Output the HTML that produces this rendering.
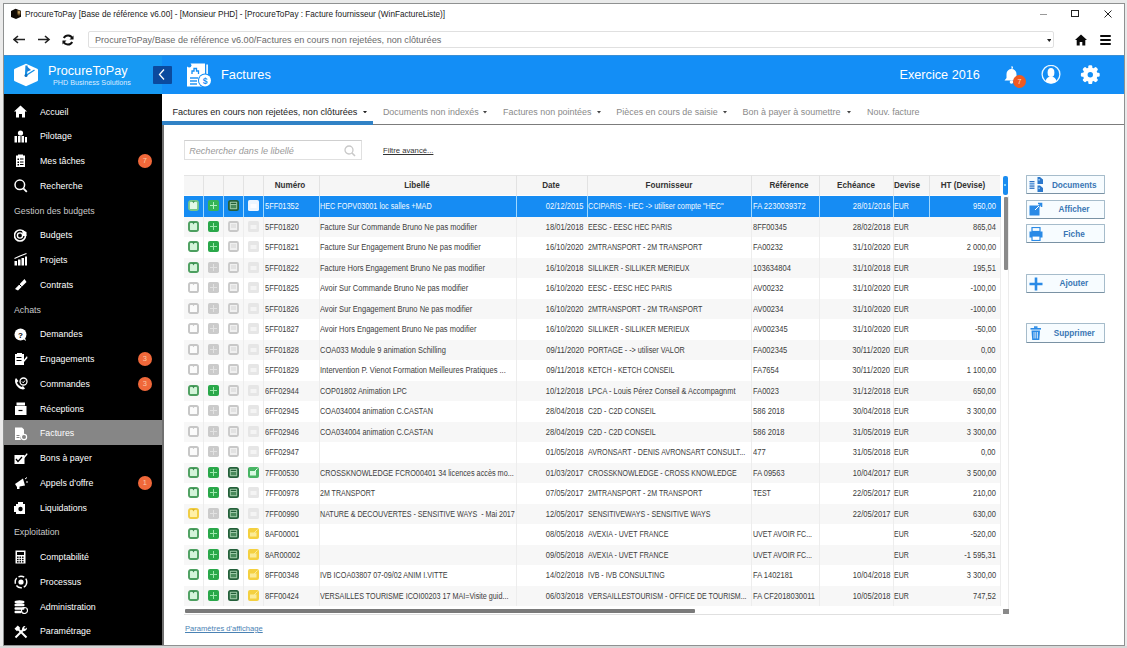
<!DOCTYPE html>
<html><head><meta charset="utf-8"><style>
*{box-sizing:border-box;margin:0;padding:0}
html,body{width:1127px;height:648px;overflow:hidden;background:#e9eaea;font-family:"Liberation Sans",sans-serif}
.abs{position:absolute}
.t{position:absolute;white-space:nowrap;line-height:1}
.tb{font-size:7.5px;color:#333}
</style></head><body>
<div class="abs" style="left:0;top:0;width:3px;height:648px;background:#ebebeb"></div>
<div class="abs" style="left:0;top:646px;width:1127px;height:2px;background:#d8d8d8"></div>
<div class="abs" style="left:3px;top:3px;width:1122px;height:643px;background:#8f9191"></div>
<div class="abs" style="left:4px;top:4px;width:1120px;height:641px;background:#fff;overflow:hidden">

<svg class="abs" style="left:5.50px;top:3.50px;" width="12" height="11.5" viewBox="0 0 12 11.5"><defs><radialGradient id="tg" cx="0.62" cy="0.35" r="0.5"><stop offset="0" stop-color="#e8c888"/><stop offset="0.5" stop-color="#7a5a28"/><stop offset="1" stop-color="#140c04"/></radialGradient></defs><path d="M1 3 L5.5 0.8 L11 2.8 L11 8.8 L6 11 L1 9Z" fill="#0e0904"/><path d="M6 1.5 L10.8 3.2 L10.8 8.5 L6.5 9.5Z" fill="url(#tg)"/><path d="M5.8 2 L6.3 9.8" stroke="#1a1208" stroke-width="0.8"/></svg>
<div class="t" style="left:21.00px;top:7.40px;font-size:8.2px;color:#1a1a1a">ProcureToPay [Base de référence v6.00] - [Monsieur PHD] - [ProcureToPay : Facture fournisseur (WinFactureListe)]</div>
<div class="abs" style="left:1036.00px;top:9.50px;width:7.00px;height:1.00px;background:#999"></div>
<div class="abs" style="left:1067.00px;top:6.00px;width:7.50px;height:6.50px;border:1px solid #222"></div>
<svg class="abs" style="left:1099.50px;top:5.50px;" width="8" height="8" viewBox="0 0 8 8"><path d="M0.5 0.5 L7.5 7.5 M7.5 0.5 L0.5 7.5" stroke="#222" stroke-width="1"/></svg>
<svg class="abs" style="left:9.00px;top:31.00px;" width="13" height="9" viewBox="0 0 13 9"><path d="M1 4.5 H12 M5 1 L1 4.5 L5 8" stroke="#222" stroke-width="1.6" fill="none"/></svg>
<svg class="abs" style="left:34.00px;top:31.00px;" width="13" height="9" viewBox="0 0 13 9"><path d="M0 4.5 H11 M7 1 L11 4.5 L7 8" stroke="#222" stroke-width="1.6" fill="none"/></svg>
<svg class="abs" style="left:58.00px;top:30.00px;" width="12" height="12" viewBox="0 0 12 12"><path d="M10.5 4.5 A4.8 4.8 0 0 0 1.8 4" stroke="#111" stroke-width="2" fill="none"/><path d="M1.5 7.5 A4.8 4.8 0 0 0 10.2 8" stroke="#111" stroke-width="2" fill="none"/><path d="M11.5 1.5 L11.5 5.5 L7.5 5.5Z" fill="#111"/><path d="M0.5 10.5 L0.5 6.5 L4.5 6.5Z" fill="#111"/></svg>
<div class="abs" style="left:84.00px;top:27.00px;width:966.00px;height:17.00px;border:1px solid #e0e0e0;border-radius:2px"></div>
<div class="t" style="left:91.00px;top:32.20px;font-size:9.1px;color:#6a6a6a">ProcureToPay/Base de référence v6.00/Factures en cours non rejetées, non clôturées</div>
<svg class="abs" style="left:1042.50px;top:34.50px;" width="4.5" height="3" viewBox="0 0 4.5 3"><path d="M0 0 H4.5 L2.25 3Z" fill="#222"/></svg>
<svg class="abs" style="left:1071.00px;top:30.00px;" width="12" height="12" viewBox="0 0 12 12"><path d="M6 0.5 L12 6 L10.3 6 L10.3 11.5 L7.3 11.5 L7.3 8 L4.7 8 L4.7 11.5 L1.7 11.5 L1.7 6 L0 6Z" fill="#0a0a0a"/></svg>
<div class="abs" style="left:1096.00px;top:31.00px;width:11.00px;height:2.00px;background:#0a0a0a;border-radius:1px"></div>
<div class="abs" style="left:1096.00px;top:35.00px;width:11.00px;height:2.00px;background:#0a0a0a;border-radius:1px"></div>
<div class="abs" style="left:1096.00px;top:39.00px;width:11.00px;height:2.00px;background:#0a0a0a;border-radius:1px"></div>
<div class="abs" style="left:0.00px;top:51.00px;width:1120.00px;height:38.50px;background:#138ef6"></div>
<div class="abs" style="left:0.00px;top:51.00px;width:158.00px;height:38.50px;background:#1699f3"></div>
<div class="abs" style="left:0.00px;top:51.00px;width:1120.00px;height:1.00px;background:#3b8fd4"></div>
<svg class="abs" style="left:9.00px;top:59.00px;" width="26" height="24" viewBox="0 0 26 24"><path d="M13 0.8 L24.2 5.8 Q25 6.2 25 7 L25 17 Q25 17.8 24.2 18.2 L13 23.2 L1.8 18.2 Q1 17.8 1 17 L1 7 Q1 6.2 1.8 5.8Z" fill="#fff"/><path d="M13.5 2.5 L13 12.5" stroke="#1490e6" stroke-width="2.2" fill="none"/><path d="M13.5 3 L18 7 L13.5 9Z" fill="#1a7fd8"/><path d="M13 12.5 L21.5 7" stroke="#1490e6" stroke-width="1.3" fill="none"/><circle cx="13" cy="12.5" r="1.5" fill="#0f6fc0"/></svg>
<div class="t" style="left:44.00px;top:60.50px;font-size:12.7px;color:#fff">ProcureToPay</div>
<div class="t" style="left:49.00px;top:75.00px;font-size:7.2px;color:#dcecff">PHD Business Solutions</div>
<div class="abs" style="left:149.00px;top:61.50px;width:19.00px;height:18.50px;background:#0b4a9e;border-radius:1px"></div>
<svg class="abs" style="left:153.00px;top:64.00px;" width="10" height="13" viewBox="0 0 10 13"><path d="M7 1.5 L2.5 6.5 L7 11.5" stroke="#fff" stroke-width="1.3" fill="none"/></svg>
<svg class="abs" style="left:182.00px;top:58.00px;" width="27" height="27" viewBox="0 0 27 27"><path d="M4.5 1.5 H19 V24.5 H1 V5 Z" fill="#fff"/><circle cx="3.2" cy="3.2" r="2.2" fill="#138ef6"/><rect x="20.3" y="2.5" width="1.6" height="14" fill="#fff"/><path d="M6 12 V9 H8 V6.5 H10.5 V9 H12.5 V12" fill="none" stroke="#138ef6" stroke-width="1.3"/><rect x="4" y="15.3" width="8" height="1.4" fill="#138ef6"/><rect x="4" y="18.3" width="7" height="1.4" fill="#138ef6"/><rect x="4" y="21.3" width="7" height="1.4" fill="#138ef6"/><circle cx="19" cy="18.5" r="7" fill="#138ef6"/><circle cx="19" cy="18.5" r="6" fill="#fff"/><text x="19" y="21.6" font-size="8.5" text-anchor="middle" fill="#138ef6" font-family="Liberation Sans" font-weight="bold">$</text></svg>
<div class="t" style="left:217.00px;top:64.80px;font-size:12.8px;color:#fff">Factures</div>
<div class="t" style="left:895.50px;top:65.20px;font-size:12.7px;color:#fff">Exercice 2016</div>
<svg class="abs" style="left:998.50px;top:60.50px;" width="17" height="19" viewBox="0 0 17 19"><path d="M8.5 1 A1.5 1.5 0 0 1 8.5 4 A5 5 0 0 1 13.5 9 V13 L15.5 15.5 H1.5 L3.5 13 V9 A5 5 0 0 1 8.5 4Z" fill="#fff"/><circle cx="8.5" cy="17" r="1.8" fill="#fff"/></svg>
<div class="abs" style="left:1008.80px;top:70.80px;width:13.00px;height:13.00px;border-radius:50%;background:#f05a22"></div>
<div class="t" style="left:1013.50px;top:74.00px;font-size:7px;color:#ffe0d0">7</div>
<svg class="abs" style="left:1037.00px;top:61.00px;" width="20" height="19" viewBox="0 0 20 19"><circle cx="10" cy="9.3" r="8.9" fill="none" stroke="#e8f6ff" stroke-width="1.3"/><ellipse cx="10" cy="7.5" rx="3.4" ry="4.6" fill="#fff"/><path d="M4.5 16.5 C5 13 7.5 11.5 10 11.5 C12.5 11.5 15 13 15.5 16.5 A8.3 8.3 0 0 1 4.5 16.5Z" fill="#fff"/></svg>
<svg class="abs" style="left:1076.00px;top:61.00px;" width="20" height="19" viewBox="0 0 20 19"><g transform="translate(10.3 9.7)"><circle r="7.2" fill="#fff"/><rect x="-2" y="-9.4" width="4" height="5" rx="1.3" fill="#fff" transform="rotate(0)"/><rect x="-2" y="-9.4" width="4" height="5" rx="1.3" fill="#fff" transform="rotate(45)"/><rect x="-2" y="-9.4" width="4" height="5" rx="1.3" fill="#fff" transform="rotate(90)"/><rect x="-2" y="-9.4" width="4" height="5" rx="1.3" fill="#fff" transform="rotate(135)"/><rect x="-2" y="-9.4" width="4" height="5" rx="1.3" fill="#fff" transform="rotate(180)"/><rect x="-2" y="-9.4" width="4" height="5" rx="1.3" fill="#fff" transform="rotate(225)"/><rect x="-2" y="-9.4" width="4" height="5" rx="1.3" fill="#fff" transform="rotate(270)"/><rect x="-2" y="-9.4" width="4" height="5" rx="1.3" fill="#fff" transform="rotate(315)"/><circle r="2.7" fill="#138ef6"/></g></svg>
<div class="abs" style="left:0.00px;top:89.50px;width:158.00px;height:552.00px;background:#000"></div>
<div class="abs" style="left:158.00px;top:121.00px;width:2.00px;height:520.00px;background:#707070"></div>
<svg class="abs" style="left:10.00px;top:100.80px;" width="14" height="14" viewBox="0 0 14 14"><path d="M6.5 0.5 L13 6.5 L11 6.5 L11 12.5 L8 12.5 L8 9 L5 9 L5 12.5 L2 12.5 L2 6.5 L0 6.5Z" fill="#fff"/></svg>
<div class="t" style="left:36.00px;top:103.50px;font-size:8.8px;color:#fff">Accueil</div>
<svg class="abs" style="left:10.00px;top:125.55px;" width="14" height="14" viewBox="0 0 14 14"><circle cx="6.5" cy="3" r="2.6" fill="#fff"/><rect x="0.5" y="6" width="2.5" height="6.5" fill="#fff"/><rect x="4" y="6" width="2.5" height="6.5" fill="#fff"/><rect x="7.5" y="6" width="2.5" height="6.5" fill="#fff"/><rect x="11" y="7" width="2" height="5.5" fill="#fff"/></svg>
<div class="t" style="left:36.00px;top:128.25px;font-size:8.8px;color:#fff">Pilotage</div>
<svg class="abs" style="left:10.00px;top:150.30px;" width="14" height="14" viewBox="0 0 14 14"><rect x="2" y="1.5" width="9" height="11.5" fill="#fff"/><rect x="4" y="0.5" width="5" height="2" fill="#fff"/><rect x="3.5" y="4.5" width="1.5" height="1.5" fill="#000"/><rect x="6" y="4.5" width="3.5" height="1" fill="#000"/><rect x="3.5" y="7.5" width="1.5" height="1.5" fill="#000"/><rect x="6" y="7.5" width="3.5" height="1" fill="#000"/><rect x="3.5" y="10" width="1.5" height="1.5" fill="#000"/><rect x="6" y="10" width="3.5" height="1" fill="#000"/></svg>
<div class="t" style="left:36.00px;top:153.00px;font-size:8.8px;color:#fff">Mes tâches</div>
<div class="abs" style="left:134px;top:149.80px;width:14px;height:14px;border-radius:50%;background:#f0683a"></div>
<div class="t" style="left:138.70px;top:153.20px;font-size:7.5px;color:#f9c9a8">7</div>
<svg class="abs" style="left:10.00px;top:175.05px;" width="14" height="14" viewBox="0 0 14 14"><circle cx="5.8" cy="5.8" r="4.8" fill="none" stroke="#fff" stroke-width="1.5"/><path d="M9.3 9.3 L12.8 12.8" stroke="#fff" stroke-width="1.8"/></svg>
<div class="t" style="left:36.00px;top:177.75px;font-size:8.8px;color:#fff">Recherche</div>
<div class="t" style="left:10.00px;top:202.50px;font-size:8.8px;color:#c8c8c8">Gestion des budgets</div>
<svg class="abs" style="left:10.00px;top:224.55px;" width="14" height="14" viewBox="0 0 14 14"><circle cx="6" cy="6.5" r="5.5" fill="none" stroke="#fff" stroke-width="1.6"/><circle cx="6" cy="6.5" r="2.6" fill="none" stroke="#fff" stroke-width="1.4"/><path d="M8 1 L12.5 3 L12.5 7 L9 7Z" fill="#fff"/></svg>
<div class="t" style="left:36.00px;top:227.25px;font-size:8.8px;color:#fff">Budgets</div>
<svg class="abs" style="left:10.00px;top:249.30px;" width="14" height="14" viewBox="0 0 14 14"><rect x="0.5" y="8" width="2.5" height="4.5" fill="#fff"/><rect x="4" y="6.5" width="2.5" height="6" fill="#fff"/><rect x="7.5" y="5" width="2.5" height="7.5" fill="#fff"/><rect x="11" y="3.5" width="2" height="9" fill="#fff"/><path d="M0.5 5.5 L6 3 L12.5 0.5" stroke="#fff" stroke-width="1.1" fill="none"/></svg>
<div class="t" style="left:36.00px;top:252.00px;font-size:8.8px;color:#fff">Projets</div>
<svg class="abs" style="left:10.00px;top:274.05px;" width="14" height="14" viewBox="0 0 14 14"><path d="M1 11 L4 12.5 L12.5 4 L10.5 1 Z" fill="#fff"/><path d="M5 6 L7.5 8.5" stroke="#000" stroke-width="1"/></svg>
<div class="t" style="left:36.00px;top:276.75px;font-size:8.8px;color:#fff">Contrats</div>
<div class="t" style="left:10.00px;top:301.50px;font-size:8.8px;color:#c8c8c8">Achats</div>
<svg class="abs" style="left:10.00px;top:323.55px;" width="14" height="14" viewBox="0 0 14 14"><circle cx="6.5" cy="6.5" r="6" fill="#fff"/><path d="M9 11 L12 13 L11 10Z" fill="#fff"/><text x="6.5" y="9.5" font-size="8" font-weight="bold" text-anchor="middle" fill="#000" font-family="Liberation Sans">?</text></svg>
<div class="t" style="left:36.00px;top:326.25px;font-size:8.8px;color:#fff">Demandes</div>
<svg class="abs" style="left:10.00px;top:348.30px;" width="14" height="14" viewBox="0 0 14 14"><rect x="1" y="2" width="9" height="11" fill="#fff"/><rect x="3" y="1" width="5" height="2" fill="#fff"/><rect x="2.5" y="5" width="5" height="1" fill="#000"/><rect x="2.5" y="8" width="5" height="1" fill="#000"/><path d="M9 9 L13 4 L13.5 6 L10 10Z" fill="#fff"/></svg>
<div class="t" style="left:36.00px;top:351.00px;font-size:8.8px;color:#fff">Engagements</div>
<div class="abs" style="left:134px;top:347.80px;width:14px;height:14px;border-radius:50%;background:#f0683a"></div>
<div class="t" style="left:138.70px;top:351.20px;font-size:7.5px;color:#f9c9a8">3</div>
<svg class="abs" style="left:10.00px;top:373.05px;" width="14" height="14" viewBox="0 0 14 14"><path d="M2 1 C0 3 1 8 5 11 C8 13 10 12.5 11 11.5 L9 9 L7.5 10 C5.5 9 3.5 7 3 5.5 L4.5 4Z" fill="#fff"/><circle cx="9.5" cy="4.5" r="3.5" fill="none" stroke="#fff" stroke-width="1.3"/><path d="M8 4.5 L9.2 5.8 L11 3.5" stroke="#fff" stroke-width="1" fill="none"/></svg>
<div class="t" style="left:36.00px;top:375.75px;font-size:8.8px;color:#fff">Commandes</div>
<div class="abs" style="left:134px;top:372.55px;width:14px;height:14px;border-radius:50%;background:#f0683a"></div>
<div class="t" style="left:138.70px;top:375.95px;font-size:7.5px;color:#f9c9a8">3</div>
<svg class="abs" style="left:10.00px;top:397.80px;" width="14" height="14" viewBox="0 0 14 14"><rect x="1" y="4" width="11.5" height="9" fill="#fff"/><rect x="2.5" y="0.5" width="8.5" height="3" fill="#fff"/><path d="M4.5 8.5 L8.5 8.5" stroke="#000" stroke-width="1.2"/></svg>
<div class="t" style="left:36.00px;top:400.50px;font-size:8.8px;color:#fff">Réceptions</div>
<div class="abs" style="left:0.00px;top:416.30px;width:158.00px;height:25.00px;background:#868686"></div>
<svg class="abs" style="left:10.00px;top:422.55px;" width="14" height="14" viewBox="0 0 14 14"><path d="M1 0.5 H8 L10 2.5 V7 A4 4 0 0 0 7 13 H1Z" fill="#fff"/><circle cx="10" cy="10" r="3.2" fill="#fff"/><circle cx="10" cy="10" r="2" fill="#868686"/><rect x="2.5" y="8" width="3" height="1" fill="#868686"/><rect x="2.5" y="10" width="3" height="1" fill="#868686"/></svg>
<div class="t" style="left:36.00px;top:425.25px;font-size:8.8px;color:#fff">Factures</div>
<svg class="abs" style="left:10.00px;top:447.30px;" width="14" height="14" viewBox="0 0 14 14"><rect x="0.5" y="4" width="10" height="9" fill="#fff"/><path d="M2 8 L4 10.5 L8 6" stroke="#000" stroke-width="1.3" fill="none"/><path d="M7 9 L13 2 L13.5 3.5 L8 10Z" fill="#fff"/></svg>
<div class="t" style="left:36.00px;top:450.00px;font-size:8.8px;color:#fff">Bons à payer</div>
<svg class="abs" style="left:10.00px;top:472.05px;" width="14" height="14" viewBox="0 0 14 14"><path d="M1 8 L9 2.5 L11 9.5 L3 11Z" fill="#fff"/><rect x="3" y="10" width="2.5" height="3" fill="#fff"/><path d="M11 3 L13 1.5 M12 6 L14 6" stroke="#fff" stroke-width="1"/></svg>
<div class="t" style="left:36.00px;top:474.75px;font-size:8.8px;color:#fff">Appels d'offre</div>
<div class="abs" style="left:134px;top:471.55px;width:14px;height:14px;border-radius:50%;background:#f0683a"></div>
<div class="t" style="left:138.70px;top:474.95px;font-size:7.5px;color:#f9c9a8">1</div>
<svg class="abs" style="left:10.00px;top:496.80px;" width="14" height="14" viewBox="0 0 14 14"><rect x="2" y="3" width="9" height="10" fill="#fff"/><rect x="4" y="1" width="5" height="3" fill="#fff"/><circle cx="6.5" cy="8" r="2.2" fill="#000"/><rect x="0" y="5" width="2" height="6" fill="#fff"/></svg>
<div class="t" style="left:36.00px;top:499.50px;font-size:8.8px;color:#fff">Liquidations</div>
<div class="t" style="left:10.00px;top:524.25px;font-size:8.8px;color:#c8c8c8">Exploitation</div>
<svg class="abs" style="left:10.00px;top:546.30px;" width="14" height="14" viewBox="0 0 14 14"><rect x="1.5" y="0.5" width="10" height="13" fill="#fff"/><rect x="3" y="2" width="7" height="3" fill="#000"/><rect x="3.0" y="6.5" width="1.6" height="1.4" fill="#000"/><rect x="5.5" y="6.5" width="1.6" height="1.4" fill="#000"/><rect x="8.0" y="6.5" width="1.6" height="1.4" fill="#000"/><rect x="3.0" y="8.8" width="1.6" height="1.4" fill="#000"/><rect x="5.5" y="8.8" width="1.6" height="1.4" fill="#000"/><rect x="8.0" y="8.8" width="1.6" height="1.4" fill="#000"/><rect x="3.0" y="11.1" width="1.6" height="1.4" fill="#000"/><rect x="5.5" y="11.1" width="1.6" height="1.4" fill="#000"/><rect x="8.0" y="11.1" width="1.6" height="1.4" fill="#000"/></svg>
<div class="t" style="left:36.00px;top:549.00px;font-size:8.8px;color:#fff">Comptabilité</div>
<svg class="abs" style="left:10.00px;top:571.05px;" width="14" height="14" viewBox="0 0 14 14"><circle cx="7" cy="7" r="5.8" fill="none" stroke="#fff" stroke-width="1.4" stroke-dasharray="6 2"/><circle cx="7" cy="7" r="2.6" fill="#fff"/></svg>
<div class="t" style="left:36.00px;top:573.75px;font-size:8.8px;color:#fff">Processus</div>
<svg class="abs" style="left:10.00px;top:595.80px;" width="14" height="14" viewBox="0 0 14 14"><ellipse cx="5.5" cy="2" rx="5" ry="1.8" fill="#fff"/><rect x="0.5" y="3.8" width="10" height="2.5" rx="1" fill="#fff"/><rect x="0.5" y="7.3" width="10" height="2.5" rx="1" fill="#fff"/><rect x="0.5" y="10.8" width="7" height="2.5" rx="1" fill="#fff"/><circle cx="10.5" cy="10.5" r="3" fill="none" stroke="#fff" stroke-width="1.1"/></svg>
<div class="t" style="left:36.00px;top:598.50px;font-size:8.8px;color:#fff">Administration</div>
<svg class="abs" style="left:10.00px;top:620.55px;" width="14" height="14" viewBox="0 0 14 14"><path d="M4 4 L12.5 12.5" stroke="#fff" stroke-width="2"/><path d="M0.5 3.8 L3.8 0.5 L6.3 3 L3 6.3Z" fill="#fff"/><path d="M1.5 12.5 L9 5" stroke="#fff" stroke-width="2"/><path d="M8.3 5.7 A3.2 3.2 0 0 1 11.5 1 L10 3 L11 4 L13 2.5 A3.2 3.2 0 0 1 8.3 5.7Z" fill="#fff"/></svg>
<div class="t" style="left:36.00px;top:623.25px;font-size:8.8px;color:#fff">Paramétrage</div>
<div class="abs" style="left:159.00px;top:120.00px;width:961.00px;height:1.00px;background:#7c7c7c"></div>
<div class="abs" style="left:158.00px;top:117.00px;width:211.00px;height:3.80px;background:#3182c6"></div>
<div class="t" style="left:168.40px;top:103.60px;font-size:9.1px;color:#222">Factures en cours non rejetées, non clôturées</div>
<svg class="abs" style="left:359.00px;top:106.50px;" width="4" height="2.5" viewBox="0 0 4 2.5"><path d="M0 0 H4 L2 2.5Z" fill="#222"/></svg>
<div class="t" style="left:378.90px;top:104.20px;font-size:8.95px;color:#8a8a8a">Documents non indexés</div>
<svg class="abs" style="left:479.30px;top:107.00px;" width="4" height="2.5" viewBox="0 0 4 2.5"><path d="M0 0 H4 L2 2.5Z" fill="#444"/></svg>
<div class="t" style="left:499.00px;top:104.20px;font-size:8.95px;color:#8a8a8a">Factures non pointées</div>
<svg class="abs" style="left:593.00px;top:107.00px;" width="4" height="2.5" viewBox="0 0 4 2.5"><path d="M0 0 H4 L2 2.5Z" fill="#444"/></svg>
<div class="t" style="left:612.30px;top:104.20px;font-size:8.95px;color:#8a8a8a">Pièces en cours de saisie</div>
<svg class="abs" style="left:718.80px;top:107.00px;" width="4" height="2.5" viewBox="0 0 4 2.5"><path d="M0 0 H4 L2 2.5Z" fill="#444"/></svg>
<div class="t" style="left:738.60px;top:104.20px;font-size:8.95px;color:#8a8a8a">Bon à payer à soumettre</div>
<svg class="abs" style="left:842.80px;top:107.00px;" width="4" height="2.5" viewBox="0 0 4 2.5"><path d="M0 0 H4 L2 2.5Z" fill="#444"/></svg>
<div class="t" style="left:863.00px;top:104.20px;font-size:8.95px;color:#8a8a8a">Nouv. facture</div>
<div class="abs" style="left:179.50px;top:136.00px;width:178.00px;height:20.00px;border:1px solid #e0e0e0;border-top-color:#cfcfcf"></div>
<div class="t" style="left:185.20px;top:142.60px;font-size:9.1px;color:#9a9a9a;font-style:italic">Rechercher dans le libellé</div>
<svg class="abs" style="left:340.00px;top:141.00px;" width="12" height="12" viewBox="0 0 12 12"><circle cx="5" cy="5" r="4" fill="none" stroke="#c8c8c8" stroke-width="1.3"/><path d="M8 8 L11 11" stroke="#c8c8c8" stroke-width="1.6"/></svg>
<div class="t" style="left:379.00px;top:142.60px;font-size:7.7px;color:#333;text-decoration:underline">Filtre avancé...</div>
<div class="abs" style="left:180.00px;top:171.00px;width:816.00px;height:21.00px;background:#f6f6f6"></div>
<div class="abs" style="left:180.00px;top:170.50px;width:816.00px;height:1.00px;background:#e4e4e4"></div>
<div class="abs" style="left:180.00px;top:191.00px;width:816.00px;height:1.00px;background:#fdfdfd"></div>
<div class="abs" style="left:199.00px;top:171.00px;width:1.00px;height:21.00px;background:#e2e2e2"></div>
<div class="abs" style="left:219.00px;top:171.00px;width:1.00px;height:21.00px;background:#e2e2e2"></div>
<div class="abs" style="left:239.00px;top:171.00px;width:1.00px;height:21.00px;background:#e2e2e2"></div>
<div class="abs" style="left:259.00px;top:171.00px;width:1.00px;height:21.00px;background:#e2e2e2"></div>
<div class="abs" style="left:315.00px;top:171.00px;width:1.00px;height:21.00px;background:#e2e2e2"></div>
<div class="abs" style="left:512.00px;top:171.00px;width:1.00px;height:21.00px;background:#e2e2e2"></div>
<div class="abs" style="left:583.00px;top:171.00px;width:1.00px;height:21.00px;background:#e2e2e2"></div>
<div class="abs" style="left:747.00px;top:171.00px;width:1.00px;height:21.00px;background:#e2e2e2"></div>
<div class="abs" style="left:815.00px;top:171.00px;width:1.00px;height:21.00px;background:#e2e2e2"></div>
<div class="abs" style="left:889.00px;top:171.00px;width:1.00px;height:21.00px;background:#e2e2e2"></div>
<div class="abs" style="left:925.00px;top:171.00px;width:1.00px;height:21.00px;background:#e2e2e2"></div>
<div class="t" style="left:136.00px;width:300px;text-align:center;top:176.20px;font-size:9.6px;font-weight:bold;color:#333;transform:scaleX(0.845);transform-origin:50% 0">Numéro</div>
<div class="t" style="left:263.00px;width:300px;text-align:center;top:176.20px;font-size:9.6px;font-weight:bold;color:#333;transform:scaleX(0.845);transform-origin:50% 0">Libellé</div>
<div class="t" style="left:397.00px;width:300px;text-align:center;top:176.20px;font-size:9.6px;font-weight:bold;color:#333;transform:scaleX(0.845);transform-origin:50% 0">Date</div>
<div class="t" style="left:514.80px;width:300px;text-align:center;top:176.20px;font-size:9.6px;font-weight:bold;color:#333;transform:scaleX(0.845);transform-origin:50% 0">Fournisseur</div>
<div class="t" style="left:634.80px;width:300px;text-align:center;top:176.20px;font-size:9.6px;font-weight:bold;color:#333;transform:scaleX(0.845);transform-origin:50% 0">Référence</div>
<div class="t" style="left:701.50px;width:300px;text-align:center;top:176.20px;font-size:9.6px;font-weight:bold;color:#333;transform:scaleX(0.845);transform-origin:50% 0">Echéance</div>
<div class="t" style="left:753.00px;width:300px;text-align:center;top:176.20px;font-size:9.6px;font-weight:bold;color:#333;transform:scaleX(0.845);transform-origin:50% 0">Devise</div>
<div class="t" style="left:809.40px;width:300px;text-align:center;top:176.20px;font-size:9.6px;font-weight:bold;color:#333;transform:scaleX(0.845);transform-origin:50% 0">HT (Devise)</div>
<div class="abs" style="left:180.00px;top:192.00px;width:817.00px;height:20.50px;background:#168cf3"></div>
<div class="abs" style="left:199.00px;top:192.00px;width:1.00px;height:20.50px;background:#9fd8ff"></div>
<div class="abs" style="left:219.00px;top:192.00px;width:1.00px;height:20.50px;background:#9fd8ff"></div>
<div class="abs" style="left:239.00px;top:192.00px;width:1.00px;height:20.50px;background:#9fd8ff"></div>
<div class="abs" style="left:259.00px;top:192.00px;width:1.00px;height:20.50px;background:#9fd8ff"></div>
<div class="abs" style="left:315.00px;top:192.00px;width:1.00px;height:20.50px;background:#9fd8ff"></div>
<div class="abs" style="left:512.00px;top:192.00px;width:1.00px;height:20.50px;background:#9fd8ff"></div>
<div class="abs" style="left:583.00px;top:192.00px;width:1.00px;height:20.50px;background:#9fd8ff"></div>
<div class="abs" style="left:747.00px;top:192.00px;width:1.00px;height:20.50px;background:#9fd8ff"></div>
<div class="abs" style="left:815.00px;top:192.00px;width:1.00px;height:20.50px;background:#9fd8ff"></div>
<div class="abs" style="left:889.00px;top:192.00px;width:1.00px;height:20.50px;background:#9fd8ff"></div>
<div class="abs" style="left:925.00px;top:192.00px;width:1.00px;height:20.50px;background:#9fd8ff"></div>
<div class="t" style="left:260.50px;top:198.40px;font-size:8.5px;color:#f4faff;transform:scaleX(0.8729);transform-origin:0 0">5FF01352</div>
<div class="t" style="left:316.20px;top:198.40px;font-size:8.5px;color:#f4faff;transform:scaleX(0.8553);transform-origin:0 0">HEC FOPV03001 loc salles +MAD</div>
<div class="t" style="right:540.40px;top:198.40px;font-size:8.5px;color:#f4faff;transform:scaleX(0.8859);transform-origin:100% 0">02/12/2015</div>
<div class="t" style="left:584.00px;top:198.40px;font-size:8.5px;color:#f4faff;transform:scaleX(0.8541);transform-origin:0 0">CCIPARIS - HEC -&gt; utiliser compte "HEC"</div>
<div class="t" style="left:748.50px;top:198.40px;font-size:8.5px;color:#f4faff;transform:scaleX(0.8835);transform-origin:0 0">FA 2230039372</div>
<div class="t" style="right:233.70px;top:198.40px;font-size:8.5px;color:#f4faff;transform:scaleX(0.8859);transform-origin:100% 0">28/01/2016</div>
<div class="t" style="left:890.40px;top:198.40px;font-size:8.5px;color:#f4faff;transform:scaleX(0.8224);transform-origin:0 0">EUR</div>
<div class="t" style="right:128.00px;top:198.40px;font-size:8.5px;color:#f4faff;transform:scaleX(0.8871);transform-origin:100% 0">950,00</div>
<svg class="abs" style="left:184.30px;top:196.30px;" width="11" height="11" viewBox="0 0 11 11"><rect x="1" y="1" width="9" height="9" rx="1.8" fill="#e4fae8" stroke="#78c888" stroke-width="1.8"/><path d="M4 1 L5.5 3.3 L7 1Z" fill="#4a9a60"/></svg>
<svg class="abs" style="left:204.15px;top:196.30px;" width="11" height="11" viewBox="0 0 11 11"><rect x="0" y="0" width="11" height="11" rx="2" fill="#36b456"/><path d="M5.5 2 V9 M2 5.5 H9" stroke="#b0f2c0" stroke-width="1"/></svg>
<svg class="abs" style="left:224.00px;top:196.30px;" width="11" height="11" viewBox="0 0 11 11"><rect x="0.9" y="0.9" width="9.2" height="9.2" rx="1.6" fill="#9cc8a6" stroke="#24603a" stroke-width="1.8"/><rect x="2.8" y="2.8" width="5.4" height="1.2" fill="#24603a"/><rect x="2.8" y="5" width="5.4" height="3.2" fill="#4a8a5c"/></svg>
<svg class="abs" style="left:243.85px;top:196.30px;" width="11" height="11" viewBox="0 0 11 11"><rect x="0" y="0" width="11" height="11" rx="1.6" fill="#eef6ff"/><rect x="2.5" y="4" width="6" height="4" fill="#fdfdff"/></svg>
<div class="abs" style="left:180.00px;top:212.50px;width:817.00px;height:20.50px;background:#f7f7f7"></div>
<div class="abs" style="left:199.00px;top:212.50px;width:1.00px;height:20.50px;background:#ededed"></div>
<div class="abs" style="left:219.00px;top:212.50px;width:1.00px;height:20.50px;background:#ededed"></div>
<div class="abs" style="left:239.00px;top:212.50px;width:1.00px;height:20.50px;background:#ededed"></div>
<div class="abs" style="left:259.00px;top:212.50px;width:1.00px;height:20.50px;background:#ededed"></div>
<div class="abs" style="left:315.00px;top:212.50px;width:1.00px;height:20.50px;background:#ededed"></div>
<div class="abs" style="left:512.00px;top:212.50px;width:1.00px;height:20.50px;background:#ededed"></div>
<div class="abs" style="left:747.00px;top:212.50px;width:1.00px;height:20.50px;background:#ededed"></div>
<div class="abs" style="left:815.00px;top:212.50px;width:1.00px;height:20.50px;background:#ededed"></div>
<div class="abs" style="left:889.00px;top:212.50px;width:1.00px;height:20.50px;background:#ededed"></div>
<div class="abs" style="left:996.00px;top:212.50px;width:1.00px;height:20.50px;background:#ededed"></div>
<div class="t" style="left:260.50px;top:218.90px;font-size:8.5px;color:#3c3c3c;transform:scaleX(0.8729);transform-origin:0 0">5FF01820</div>
<div class="t" style="left:316.20px;top:218.90px;font-size:8.5px;color:#3c3c3c;transform:scaleX(0.8835);transform-origin:0 0">Facture Sur Commande Bruno Ne pas modifier</div>
<div class="t" style="right:540.40px;top:218.90px;font-size:8.5px;color:#3c3c3c;transform:scaleX(0.8859);transform-origin:100% 0">18/01/2018</div>
<div class="t" style="left:584.00px;top:218.90px;font-size:8.5px;color:#3c3c3c;transform:scaleX(0.8282);transform-origin:0 0">EESC - EESC HEC PARIS</div>
<div class="t" style="left:748.50px;top:218.90px;font-size:8.5px;color:#3c3c3c;transform:scaleX(0.8729);transform-origin:0 0">8FF00345</div>
<div class="t" style="right:233.70px;top:218.90px;font-size:8.5px;color:#3c3c3c;transform:scaleX(0.8859);transform-origin:100% 0">28/02/2018</div>
<div class="t" style="left:890.40px;top:218.90px;font-size:8.5px;color:#3c3c3c;transform:scaleX(0.8224);transform-origin:0 0">EUR</div>
<div class="t" style="right:128.00px;top:218.90px;font-size:8.5px;color:#3c3c3c;transform:scaleX(0.8871);transform-origin:100% 0">865,04</div>
<svg class="abs" style="left:184.30px;top:216.80px;" width="11" height="11" viewBox="0 0 11 11"><rect x="1" y="1" width="9" height="9" rx="1.8" fill="#d4f4da" stroke="#4c9f5f" stroke-width="1.9"/><path d="M4 1 L5.5 3.4 L7 1Z" fill="#3a8a50"/></svg>
<svg class="abs" style="left:204.15px;top:216.80px;" width="11" height="11" viewBox="0 0 11 11"><rect x="0" y="0" width="11" height="11" rx="2" fill="#2aa84a"/><path d="M5.5 2 V9 M2 5.5 H9" stroke="#9ee8ae" stroke-width="1"/></svg>
<svg class="abs" style="left:224.00px;top:216.80px;" width="11" height="11" viewBox="0 0 11 11"><rect x="1" y="1" width="9" height="9" rx="1.2" fill="#f0f0f0" stroke="#c8c8c8" stroke-width="1.8"/><path d="M3 4 H8 M3 6 H8" stroke="#d0d0d0" stroke-width="0.9"/></svg>
<svg class="abs" style="left:243.85px;top:216.80px;" width="11" height="11" viewBox="0 0 11 11"><rect x="0" y="0" width="11" height="11" rx="1.6" fill="#e6e6e6"/><rect x="2.5" y="4" width="6" height="4" fill="#f4f4f4"/></svg>
<div class="abs" style="left:180.00px;top:233.00px;width:817.00px;height:20.50px;background:#ffffff"></div>
<div class="abs" style="left:199.00px;top:233.00px;width:1.00px;height:20.50px;background:#ededed"></div>
<div class="abs" style="left:219.00px;top:233.00px;width:1.00px;height:20.50px;background:#ededed"></div>
<div class="abs" style="left:239.00px;top:233.00px;width:1.00px;height:20.50px;background:#ededed"></div>
<div class="abs" style="left:259.00px;top:233.00px;width:1.00px;height:20.50px;background:#ededed"></div>
<div class="abs" style="left:315.00px;top:233.00px;width:1.00px;height:20.50px;background:#ededed"></div>
<div class="abs" style="left:512.00px;top:233.00px;width:1.00px;height:20.50px;background:#ededed"></div>
<div class="abs" style="left:747.00px;top:233.00px;width:1.00px;height:20.50px;background:#ededed"></div>
<div class="abs" style="left:815.00px;top:233.00px;width:1.00px;height:20.50px;background:#ededed"></div>
<div class="abs" style="left:889.00px;top:233.00px;width:1.00px;height:20.50px;background:#ededed"></div>
<div class="abs" style="left:996.00px;top:233.00px;width:1.00px;height:20.50px;background:#ededed"></div>
<div class="t" style="left:260.50px;top:239.40px;font-size:8.5px;color:#3c3c3c;transform:scaleX(0.8729);transform-origin:0 0">5FF01821</div>
<div class="t" style="left:316.20px;top:239.40px;font-size:8.5px;color:#3c3c3c;transform:scaleX(0.8835);transform-origin:0 0">Facture Sur Engagement Bruno Ne pas modifier</div>
<div class="t" style="right:540.40px;top:239.40px;font-size:8.5px;color:#3c3c3c;transform:scaleX(0.8859);transform-origin:100% 0">16/10/2020</div>
<div class="t" style="left:584.00px;top:239.40px;font-size:8.5px;color:#3c3c3c;transform:scaleX(0.8294);transform-origin:0 0">2MTRANSPORT - 2M TRANSPORT</div>
<div class="t" style="left:748.50px;top:239.40px;font-size:8.5px;color:#3c3c3c;transform:scaleX(0.8824);transform-origin:0 0">FA00232</div>
<div class="t" style="right:233.70px;top:239.40px;font-size:8.5px;color:#3c3c3c;transform:scaleX(0.8859);transform-origin:100% 0">31/10/2020</div>
<div class="t" style="left:890.40px;top:239.40px;font-size:8.5px;color:#3c3c3c;transform:scaleX(0.8224);transform-origin:0 0">EUR</div>
<div class="t" style="right:128.00px;top:239.40px;font-size:8.5px;color:#3c3c3c;transform:scaleX(0.8835);transform-origin:100% 0">2 000,00</div>
<svg class="abs" style="left:184.30px;top:237.30px;" width="11" height="11" viewBox="0 0 11 11"><rect x="1" y="1" width="9" height="9" rx="1.8" fill="#d4f4da" stroke="#4c9f5f" stroke-width="1.9"/><path d="M4 1 L5.5 3.4 L7 1Z" fill="#3a8a50"/></svg>
<svg class="abs" style="left:204.15px;top:237.30px;" width="11" height="11" viewBox="0 0 11 11"><rect x="0" y="0" width="11" height="11" rx="2" fill="#2aa84a"/><path d="M5.5 2 V9 M2 5.5 H9" stroke="#9ee8ae" stroke-width="1"/></svg>
<svg class="abs" style="left:224.00px;top:237.30px;" width="11" height="11" viewBox="0 0 11 11"><rect x="1" y="1" width="9" height="9" rx="1.2" fill="#f0f0f0" stroke="#c8c8c8" stroke-width="1.8"/><path d="M3 4 H8 M3 6 H8" stroke="#d0d0d0" stroke-width="0.9"/></svg>
<svg class="abs" style="left:243.85px;top:237.30px;" width="11" height="11" viewBox="0 0 11 11"><rect x="0" y="0" width="11" height="11" rx="1.6" fill="#e6e6e6"/><rect x="2.5" y="4" width="6" height="4" fill="#f4f4f4"/></svg>
<div class="abs" style="left:180.00px;top:253.50px;width:817.00px;height:20.50px;background:#f7f7f7"></div>
<div class="abs" style="left:199.00px;top:253.50px;width:1.00px;height:20.50px;background:#ededed"></div>
<div class="abs" style="left:219.00px;top:253.50px;width:1.00px;height:20.50px;background:#ededed"></div>
<div class="abs" style="left:239.00px;top:253.50px;width:1.00px;height:20.50px;background:#ededed"></div>
<div class="abs" style="left:259.00px;top:253.50px;width:1.00px;height:20.50px;background:#ededed"></div>
<div class="abs" style="left:315.00px;top:253.50px;width:1.00px;height:20.50px;background:#ededed"></div>
<div class="abs" style="left:512.00px;top:253.50px;width:1.00px;height:20.50px;background:#ededed"></div>
<div class="abs" style="left:747.00px;top:253.50px;width:1.00px;height:20.50px;background:#ededed"></div>
<div class="abs" style="left:815.00px;top:253.50px;width:1.00px;height:20.50px;background:#ededed"></div>
<div class="abs" style="left:889.00px;top:253.50px;width:1.00px;height:20.50px;background:#ededed"></div>
<div class="abs" style="left:996.00px;top:253.50px;width:1.00px;height:20.50px;background:#ededed"></div>
<div class="t" style="left:260.50px;top:259.90px;font-size:8.5px;color:#3c3c3c;transform:scaleX(0.8729);transform-origin:0 0">5FF01822</div>
<div class="t" style="left:316.20px;top:259.90px;font-size:8.5px;color:#3c3c3c;transform:scaleX(0.8835);transform-origin:0 0">Facture Hors Engagement Bruno Ne pas modifier</div>
<div class="t" style="right:540.40px;top:259.90px;font-size:8.5px;color:#3c3c3c;transform:scaleX(0.8859);transform-origin:100% 0">16/10/2018</div>
<div class="t" style="left:584.00px;top:259.90px;font-size:8.5px;color:#3c3c3c;transform:scaleX(0.8235);transform-origin:0 0">SILLIKER - SILLIKER MERIEUX</div>
<div class="t" style="left:748.50px;top:259.90px;font-size:8.5px;color:#3c3c3c;transform:scaleX(0.8918);transform-origin:0 0">103634804</div>
<div class="t" style="right:233.70px;top:259.90px;font-size:8.5px;color:#3c3c3c;transform:scaleX(0.8859);transform-origin:100% 0">31/10/2018</div>
<div class="t" style="left:890.40px;top:259.90px;font-size:8.5px;color:#3c3c3c;transform:scaleX(0.8224);transform-origin:0 0">EUR</div>
<div class="t" style="right:128.00px;top:259.90px;font-size:8.5px;color:#3c3c3c;transform:scaleX(0.8871);transform-origin:100% 0">195,51</div>
<svg class="abs" style="left:184.30px;top:257.80px;" width="11" height="11" viewBox="0 0 11 11"><rect x="1" y="1" width="9" height="9" rx="1.8" fill="#d4f4da" stroke="#4c9f5f" stroke-width="1.9"/><path d="M4 1 L5.5 3.4 L7 1Z" fill="#3a8a50"/></svg>
<svg class="abs" style="left:204.15px;top:257.80px;" width="11" height="11" viewBox="0 0 11 11"><rect x="0" y="0" width="11" height="11" rx="1.8" fill="#cbcbcb"/><path d="M5.5 2 V9 M2 5.5 H9" stroke="#e2e2e2" stroke-width="1"/></svg>
<svg class="abs" style="left:224.00px;top:257.80px;" width="11" height="11" viewBox="0 0 11 11"><rect x="1" y="1" width="9" height="9" rx="1.2" fill="#f0f0f0" stroke="#c8c8c8" stroke-width="1.8"/><path d="M3 4 H8 M3 6 H8" stroke="#d0d0d0" stroke-width="0.9"/></svg>
<svg class="abs" style="left:243.85px;top:257.80px;" width="11" height="11" viewBox="0 0 11 11"><rect x="0" y="0" width="11" height="11" rx="1.6" fill="#e6e6e6"/><rect x="2.5" y="4" width="6" height="4" fill="#f4f4f4"/></svg>
<div class="abs" style="left:180.00px;top:274.00px;width:817.00px;height:20.50px;background:#ffffff"></div>
<div class="abs" style="left:199.00px;top:274.00px;width:1.00px;height:20.50px;background:#ededed"></div>
<div class="abs" style="left:219.00px;top:274.00px;width:1.00px;height:20.50px;background:#ededed"></div>
<div class="abs" style="left:239.00px;top:274.00px;width:1.00px;height:20.50px;background:#ededed"></div>
<div class="abs" style="left:259.00px;top:274.00px;width:1.00px;height:20.50px;background:#ededed"></div>
<div class="abs" style="left:315.00px;top:274.00px;width:1.00px;height:20.50px;background:#ededed"></div>
<div class="abs" style="left:512.00px;top:274.00px;width:1.00px;height:20.50px;background:#ededed"></div>
<div class="abs" style="left:747.00px;top:274.00px;width:1.00px;height:20.50px;background:#ededed"></div>
<div class="abs" style="left:815.00px;top:274.00px;width:1.00px;height:20.50px;background:#ededed"></div>
<div class="abs" style="left:889.00px;top:274.00px;width:1.00px;height:20.50px;background:#ededed"></div>
<div class="abs" style="left:996.00px;top:274.00px;width:1.00px;height:20.50px;background:#ededed"></div>
<div class="t" style="left:260.50px;top:280.40px;font-size:8.5px;color:#3c3c3c;transform:scaleX(0.8729);transform-origin:0 0">5FF01825</div>
<div class="t" style="left:316.20px;top:280.40px;font-size:8.5px;color:#3c3c3c;transform:scaleX(0.8824);transform-origin:0 0">Avoir Sur Commande Bruno Ne pas modifier</div>
<div class="t" style="right:540.40px;top:280.40px;font-size:8.5px;color:#3c3c3c;transform:scaleX(0.8859);transform-origin:100% 0">16/10/2020</div>
<div class="t" style="left:584.00px;top:280.40px;font-size:8.5px;color:#3c3c3c;transform:scaleX(0.8282);transform-origin:0 0">EESC - EESC HEC PARIS</div>
<div class="t" style="left:748.50px;top:280.40px;font-size:8.5px;color:#3c3c3c;transform:scaleX(0.8847);transform-origin:0 0">AV00232</div>
<div class="t" style="right:233.70px;top:280.40px;font-size:8.5px;color:#3c3c3c;transform:scaleX(0.8859);transform-origin:100% 0">31/10/2020</div>
<div class="t" style="left:890.40px;top:280.40px;font-size:8.5px;color:#3c3c3c;transform:scaleX(0.8224);transform-origin:0 0">EUR</div>
<div class="t" style="right:128.00px;top:280.40px;font-size:8.5px;color:#3c3c3c;transform:scaleX(0.8812);transform-origin:100% 0">-100,00</div>
<svg class="abs" style="left:184.30px;top:278.30px;" width="11" height="11" viewBox="0 0 11 11"><rect x="1" y="1" width="9" height="9" rx="1.6" fill="#fbfbfb" stroke="#c6c6c6" stroke-width="1.9"/><path d="M4 1 L5.5 3.3 L7 1Z" fill="#c6c6c6"/></svg>
<svg class="abs" style="left:204.15px;top:278.30px;" width="11" height="11" viewBox="0 0 11 11"><rect x="0" y="0" width="11" height="11" rx="1.8" fill="#cbcbcb"/><path d="M5.5 2 V9 M2 5.5 H9" stroke="#e2e2e2" stroke-width="1"/></svg>
<svg class="abs" style="left:224.00px;top:278.30px;" width="11" height="11" viewBox="0 0 11 11"><rect x="1" y="1" width="9" height="9" rx="1.2" fill="#f0f0f0" stroke="#c8c8c8" stroke-width="1.8"/><path d="M3 4 H8 M3 6 H8" stroke="#d0d0d0" stroke-width="0.9"/></svg>
<svg class="abs" style="left:243.85px;top:278.30px;" width="11" height="11" viewBox="0 0 11 11"><rect x="0" y="0" width="11" height="11" rx="1.6" fill="#e6e6e6"/><rect x="2.5" y="4" width="6" height="4" fill="#f4f4f4"/></svg>
<div class="abs" style="left:180.00px;top:294.50px;width:817.00px;height:20.50px;background:#f7f7f7"></div>
<div class="abs" style="left:199.00px;top:294.50px;width:1.00px;height:20.50px;background:#ededed"></div>
<div class="abs" style="left:219.00px;top:294.50px;width:1.00px;height:20.50px;background:#ededed"></div>
<div class="abs" style="left:239.00px;top:294.50px;width:1.00px;height:20.50px;background:#ededed"></div>
<div class="abs" style="left:259.00px;top:294.50px;width:1.00px;height:20.50px;background:#ededed"></div>
<div class="abs" style="left:315.00px;top:294.50px;width:1.00px;height:20.50px;background:#ededed"></div>
<div class="abs" style="left:512.00px;top:294.50px;width:1.00px;height:20.50px;background:#ededed"></div>
<div class="abs" style="left:747.00px;top:294.50px;width:1.00px;height:20.50px;background:#ededed"></div>
<div class="abs" style="left:815.00px;top:294.50px;width:1.00px;height:20.50px;background:#ededed"></div>
<div class="abs" style="left:889.00px;top:294.50px;width:1.00px;height:20.50px;background:#ededed"></div>
<div class="abs" style="left:996.00px;top:294.50px;width:1.00px;height:20.50px;background:#ededed"></div>
<div class="t" style="left:260.50px;top:300.90px;font-size:8.5px;color:#3c3c3c;transform:scaleX(0.8729);transform-origin:0 0">5FF01826</div>
<div class="t" style="left:316.20px;top:300.90px;font-size:8.5px;color:#3c3c3c;transform:scaleX(0.8835);transform-origin:0 0">Avoir Sur Engagement Bruno Ne pas modifier</div>
<div class="t" style="right:540.40px;top:300.90px;font-size:8.5px;color:#3c3c3c;transform:scaleX(0.8859);transform-origin:100% 0">16/10/2020</div>
<div class="t" style="left:584.00px;top:300.90px;font-size:8.5px;color:#3c3c3c;transform:scaleX(0.8294);transform-origin:0 0">2MTRANSPORT - 2M TRANSPORT</div>
<div class="t" style="left:748.50px;top:300.90px;font-size:8.5px;color:#3c3c3c;transform:scaleX(0.8847);transform-origin:0 0">AV00234</div>
<div class="t" style="right:233.70px;top:300.90px;font-size:8.5px;color:#3c3c3c;transform:scaleX(0.8859);transform-origin:100% 0">31/10/2020</div>
<div class="t" style="left:890.40px;top:300.90px;font-size:8.5px;color:#3c3c3c;transform:scaleX(0.8224);transform-origin:0 0">EUR</div>
<div class="t" style="right:128.00px;top:300.90px;font-size:8.5px;color:#3c3c3c;transform:scaleX(0.8812);transform-origin:100% 0">-100,00</div>
<svg class="abs" style="left:184.30px;top:298.80px;" width="11" height="11" viewBox="0 0 11 11"><rect x="1" y="1" width="9" height="9" rx="1.6" fill="#fbfbfb" stroke="#c6c6c6" stroke-width="1.9"/><path d="M4 1 L5.5 3.3 L7 1Z" fill="#c6c6c6"/></svg>
<svg class="abs" style="left:204.15px;top:298.80px;" width="11" height="11" viewBox="0 0 11 11"><rect x="0" y="0" width="11" height="11" rx="1.8" fill="#cbcbcb"/><path d="M5.5 2 V9 M2 5.5 H9" stroke="#e2e2e2" stroke-width="1"/></svg>
<svg class="abs" style="left:224.00px;top:298.80px;" width="11" height="11" viewBox="0 0 11 11"><rect x="1" y="1" width="9" height="9" rx="1.2" fill="#f0f0f0" stroke="#c8c8c8" stroke-width="1.8"/><path d="M3 4 H8 M3 6 H8" stroke="#d0d0d0" stroke-width="0.9"/></svg>
<svg class="abs" style="left:243.85px;top:298.80px;" width="11" height="11" viewBox="0 0 11 11"><rect x="0" y="0" width="11" height="11" rx="1.6" fill="#e6e6e6"/><rect x="2.5" y="4" width="6" height="4" fill="#f4f4f4"/></svg>
<div class="abs" style="left:180.00px;top:315.00px;width:817.00px;height:20.50px;background:#ffffff"></div>
<div class="abs" style="left:199.00px;top:315.00px;width:1.00px;height:20.50px;background:#ededed"></div>
<div class="abs" style="left:219.00px;top:315.00px;width:1.00px;height:20.50px;background:#ededed"></div>
<div class="abs" style="left:239.00px;top:315.00px;width:1.00px;height:20.50px;background:#ededed"></div>
<div class="abs" style="left:259.00px;top:315.00px;width:1.00px;height:20.50px;background:#ededed"></div>
<div class="abs" style="left:315.00px;top:315.00px;width:1.00px;height:20.50px;background:#ededed"></div>
<div class="abs" style="left:512.00px;top:315.00px;width:1.00px;height:20.50px;background:#ededed"></div>
<div class="abs" style="left:747.00px;top:315.00px;width:1.00px;height:20.50px;background:#ededed"></div>
<div class="abs" style="left:815.00px;top:315.00px;width:1.00px;height:20.50px;background:#ededed"></div>
<div class="abs" style="left:889.00px;top:315.00px;width:1.00px;height:20.50px;background:#ededed"></div>
<div class="abs" style="left:996.00px;top:315.00px;width:1.00px;height:20.50px;background:#ededed"></div>
<div class="t" style="left:260.50px;top:321.40px;font-size:8.5px;color:#3c3c3c;transform:scaleX(0.8729);transform-origin:0 0">5FF01827</div>
<div class="t" style="left:316.20px;top:321.40px;font-size:8.5px;color:#3c3c3c;transform:scaleX(0.8835);transform-origin:0 0">Avoir Hors Engagement Bruno Ne pas modifier</div>
<div class="t" style="right:540.40px;top:321.40px;font-size:8.5px;color:#3c3c3c;transform:scaleX(0.8859);transform-origin:100% 0">16/10/2020</div>
<div class="t" style="left:584.00px;top:321.40px;font-size:8.5px;color:#3c3c3c;transform:scaleX(0.8235);transform-origin:0 0">SILLIKER - SILLIKER MERIEUX</div>
<div class="t" style="left:748.50px;top:321.40px;font-size:8.5px;color:#3c3c3c;transform:scaleX(0.8859);transform-origin:0 0">AV002345</div>
<div class="t" style="right:233.70px;top:321.40px;font-size:8.5px;color:#3c3c3c;transform:scaleX(0.8859);transform-origin:100% 0">31/10/2020</div>
<div class="t" style="left:890.40px;top:321.40px;font-size:8.5px;color:#3c3c3c;transform:scaleX(0.8224);transform-origin:0 0">EUR</div>
<div class="t" style="right:128.00px;top:321.40px;font-size:8.5px;color:#3c3c3c;transform:scaleX(0.8788);transform-origin:100% 0">-50,00</div>
<svg class="abs" style="left:184.30px;top:319.30px;" width="11" height="11" viewBox="0 0 11 11"><rect x="1" y="1" width="9" height="9" rx="1.6" fill="#fbfbfb" stroke="#c6c6c6" stroke-width="1.9"/><path d="M4 1 L5.5 3.3 L7 1Z" fill="#c6c6c6"/></svg>
<svg class="abs" style="left:204.15px;top:319.30px;" width="11" height="11" viewBox="0 0 11 11"><rect x="0" y="0" width="11" height="11" rx="1.8" fill="#cbcbcb"/><path d="M5.5 2 V9 M2 5.5 H9" stroke="#e2e2e2" stroke-width="1"/></svg>
<svg class="abs" style="left:224.00px;top:319.30px;" width="11" height="11" viewBox="0 0 11 11"><rect x="1" y="1" width="9" height="9" rx="1.2" fill="#f0f0f0" stroke="#c8c8c8" stroke-width="1.8"/><path d="M3 4 H8 M3 6 H8" stroke="#d0d0d0" stroke-width="0.9"/></svg>
<svg class="abs" style="left:243.85px;top:319.30px;" width="11" height="11" viewBox="0 0 11 11"><rect x="0" y="0" width="11" height="11" rx="1.6" fill="#e6e6e6"/><rect x="2.5" y="4" width="6" height="4" fill="#f4f4f4"/></svg>
<div class="abs" style="left:180.00px;top:335.50px;width:817.00px;height:20.50px;background:#f7f7f7"></div>
<div class="abs" style="left:199.00px;top:335.50px;width:1.00px;height:20.50px;background:#ededed"></div>
<div class="abs" style="left:219.00px;top:335.50px;width:1.00px;height:20.50px;background:#ededed"></div>
<div class="abs" style="left:239.00px;top:335.50px;width:1.00px;height:20.50px;background:#ededed"></div>
<div class="abs" style="left:259.00px;top:335.50px;width:1.00px;height:20.50px;background:#ededed"></div>
<div class="abs" style="left:315.00px;top:335.50px;width:1.00px;height:20.50px;background:#ededed"></div>
<div class="abs" style="left:512.00px;top:335.50px;width:1.00px;height:20.50px;background:#ededed"></div>
<div class="abs" style="left:747.00px;top:335.50px;width:1.00px;height:20.50px;background:#ededed"></div>
<div class="abs" style="left:815.00px;top:335.50px;width:1.00px;height:20.50px;background:#ededed"></div>
<div class="abs" style="left:889.00px;top:335.50px;width:1.00px;height:20.50px;background:#ededed"></div>
<div class="abs" style="left:996.00px;top:335.50px;width:1.00px;height:20.50px;background:#ededed"></div>
<div class="t" style="left:260.50px;top:341.90px;font-size:8.5px;color:#3c3c3c;transform:scaleX(0.8729);transform-origin:0 0">5FF01828</div>
<div class="t" style="left:316.20px;top:341.90px;font-size:8.5px;color:#3c3c3c;transform:scaleX(0.8788);transform-origin:0 0">COA033 Module 9 animation Schilling</div>
<div class="t" style="right:540.40px;top:341.90px;font-size:8.5px;color:#3c3c3c;transform:scaleX(0.8988);transform-origin:100% 0">09/11/2020</div>
<div class="t" style="left:584.00px;top:341.90px;font-size:8.5px;color:#3c3c3c;transform:scaleX(0.8518);transform-origin:0 0">PORTAGE - -&gt; utiliser VALOR</div>
<div class="t" style="left:748.50px;top:341.90px;font-size:8.5px;color:#3c3c3c;transform:scaleX(0.8835);transform-origin:0 0">FA002345</div>
<div class="t" style="right:233.70px;top:341.90px;font-size:8.5px;color:#3c3c3c;transform:scaleX(0.8988);transform-origin:100% 0">30/11/2020</div>
<div class="t" style="left:890.40px;top:341.90px;font-size:8.5px;color:#3c3c3c;transform:scaleX(0.8224);transform-origin:0 0">EUR</div>
<div class="t" style="right:128.00px;top:341.90px;font-size:8.5px;color:#3c3c3c;transform:scaleX(0.8835);transform-origin:100% 0">0,00</div>
<svg class="abs" style="left:184.30px;top:339.80px;" width="11" height="11" viewBox="0 0 11 11"><rect x="1" y="1" width="9" height="9" rx="1.6" fill="#fbfbfb" stroke="#c6c6c6" stroke-width="1.9"/><path d="M4 1 L5.5 3.3 L7 1Z" fill="#c6c6c6"/></svg>
<svg class="abs" style="left:204.15px;top:339.80px;" width="11" height="11" viewBox="0 0 11 11"><rect x="0" y="0" width="11" height="11" rx="1.8" fill="#cbcbcb"/><path d="M5.5 2 V9 M2 5.5 H9" stroke="#e2e2e2" stroke-width="1"/></svg>
<svg class="abs" style="left:224.00px;top:339.80px;" width="11" height="11" viewBox="0 0 11 11"><rect x="1" y="1" width="9" height="9" rx="1.2" fill="#f0f0f0" stroke="#c8c8c8" stroke-width="1.8"/><path d="M3 4 H8 M3 6 H8" stroke="#d0d0d0" stroke-width="0.9"/></svg>
<svg class="abs" style="left:243.85px;top:339.80px;" width="11" height="11" viewBox="0 0 11 11"><rect x="0" y="0" width="11" height="11" rx="1.6" fill="#e6e6e6"/><rect x="2.5" y="4" width="6" height="4" fill="#f4f4f4"/></svg>
<div class="abs" style="left:180.00px;top:356.00px;width:817.00px;height:20.50px;background:#ffffff"></div>
<div class="abs" style="left:199.00px;top:356.00px;width:1.00px;height:20.50px;background:#ededed"></div>
<div class="abs" style="left:219.00px;top:356.00px;width:1.00px;height:20.50px;background:#ededed"></div>
<div class="abs" style="left:239.00px;top:356.00px;width:1.00px;height:20.50px;background:#ededed"></div>
<div class="abs" style="left:259.00px;top:356.00px;width:1.00px;height:20.50px;background:#ededed"></div>
<div class="abs" style="left:315.00px;top:356.00px;width:1.00px;height:20.50px;background:#ededed"></div>
<div class="abs" style="left:512.00px;top:356.00px;width:1.00px;height:20.50px;background:#ededed"></div>
<div class="abs" style="left:747.00px;top:356.00px;width:1.00px;height:20.50px;background:#ededed"></div>
<div class="abs" style="left:815.00px;top:356.00px;width:1.00px;height:20.50px;background:#ededed"></div>
<div class="abs" style="left:889.00px;top:356.00px;width:1.00px;height:20.50px;background:#ededed"></div>
<div class="abs" style="left:996.00px;top:356.00px;width:1.00px;height:20.50px;background:#ededed"></div>
<div class="t" style="left:260.50px;top:362.40px;font-size:8.5px;color:#3c3c3c;transform:scaleX(0.8729);transform-origin:0 0">5FF01829</div>
<div class="t" style="left:316.20px;top:362.40px;font-size:8.5px;color:#3c3c3c;transform:scaleX(0.8871);transform-origin:0 0">Intervention P. Vienot Formation Meilleures Pratiques ...</div>
<div class="t" style="right:540.40px;top:362.40px;font-size:8.5px;color:#3c3c3c;transform:scaleX(0.8988);transform-origin:100% 0">09/11/2018</div>
<div class="t" style="left:584.00px;top:362.40px;font-size:8.5px;color:#3c3c3c;transform:scaleX(0.8235);transform-origin:0 0">KETCH - KETCH CONSEIL</div>
<div class="t" style="left:748.50px;top:362.40px;font-size:8.5px;color:#3c3c3c;transform:scaleX(0.8800);transform-origin:0 0">FA7654</div>
<div class="t" style="right:233.70px;top:362.40px;font-size:8.5px;color:#3c3c3c;transform:scaleX(0.8988);transform-origin:100% 0">30/11/2020</div>
<div class="t" style="left:890.40px;top:362.40px;font-size:8.5px;color:#3c3c3c;transform:scaleX(0.8224);transform-origin:0 0">EUR</div>
<div class="t" style="right:128.00px;top:362.40px;font-size:8.5px;color:#3c3c3c;transform:scaleX(0.8835);transform-origin:100% 0">1 100,00</div>
<svg class="abs" style="left:184.30px;top:360.30px;" width="11" height="11" viewBox="0 0 11 11"><rect x="1" y="1" width="9" height="9" rx="1.6" fill="#fbfbfb" stroke="#c6c6c6" stroke-width="1.9"/><path d="M4 1 L5.5 3.3 L7 1Z" fill="#c6c6c6"/></svg>
<svg class="abs" style="left:204.15px;top:360.30px;" width="11" height="11" viewBox="0 0 11 11"><rect x="0" y="0" width="11" height="11" rx="1.8" fill="#cbcbcb"/><path d="M5.5 2 V9 M2 5.5 H9" stroke="#e2e2e2" stroke-width="1"/></svg>
<svg class="abs" style="left:224.00px;top:360.30px;" width="11" height="11" viewBox="0 0 11 11"><rect x="1" y="1" width="9" height="9" rx="1.2" fill="#f0f0f0" stroke="#c8c8c8" stroke-width="1.8"/><path d="M3 4 H8 M3 6 H8" stroke="#d0d0d0" stroke-width="0.9"/></svg>
<svg class="abs" style="left:243.85px;top:360.30px;" width="11" height="11" viewBox="0 0 11 11"><rect x="0" y="0" width="11" height="11" rx="1.6" fill="#e6e6e6"/><rect x="2.5" y="4" width="6" height="4" fill="#f4f4f4"/></svg>
<div class="abs" style="left:180.00px;top:376.50px;width:817.00px;height:20.50px;background:#f7f7f7"></div>
<div class="abs" style="left:199.00px;top:376.50px;width:1.00px;height:20.50px;background:#ededed"></div>
<div class="abs" style="left:219.00px;top:376.50px;width:1.00px;height:20.50px;background:#ededed"></div>
<div class="abs" style="left:239.00px;top:376.50px;width:1.00px;height:20.50px;background:#ededed"></div>
<div class="abs" style="left:259.00px;top:376.50px;width:1.00px;height:20.50px;background:#ededed"></div>
<div class="abs" style="left:315.00px;top:376.50px;width:1.00px;height:20.50px;background:#ededed"></div>
<div class="abs" style="left:512.00px;top:376.50px;width:1.00px;height:20.50px;background:#ededed"></div>
<div class="abs" style="left:747.00px;top:376.50px;width:1.00px;height:20.50px;background:#ededed"></div>
<div class="abs" style="left:815.00px;top:376.50px;width:1.00px;height:20.50px;background:#ededed"></div>
<div class="abs" style="left:889.00px;top:376.50px;width:1.00px;height:20.50px;background:#ededed"></div>
<div class="abs" style="left:996.00px;top:376.50px;width:1.00px;height:20.50px;background:#ededed"></div>
<div class="t" style="left:260.50px;top:382.90px;font-size:8.5px;color:#3c3c3c;transform:scaleX(0.8729);transform-origin:0 0">6FF02944</div>
<div class="t" style="left:316.20px;top:382.90px;font-size:8.5px;color:#3c3c3c;transform:scaleX(0.8635);transform-origin:0 0">COP01802 Animation LPC</div>
<div class="t" style="right:540.40px;top:382.90px;font-size:8.5px;color:#3c3c3c;transform:scaleX(0.8859);transform-origin:100% 0">10/12/2018</div>
<div class="t" style="left:584.00px;top:382.90px;font-size:8.5px;color:#3c3c3c;transform:scaleX(0.8718);transform-origin:0 0">LPCA - Louis Pérez Conseil &amp; Accompagnmt</div>
<div class="t" style="left:748.50px;top:382.90px;font-size:8.5px;color:#3c3c3c;transform:scaleX(0.8800);transform-origin:0 0">FA0023</div>
<div class="t" style="right:233.70px;top:382.90px;font-size:8.5px;color:#3c3c3c;transform:scaleX(0.8859);transform-origin:100% 0">31/12/2018</div>
<div class="t" style="left:890.40px;top:382.90px;font-size:8.5px;color:#3c3c3c;transform:scaleX(0.8224);transform-origin:0 0">EUR</div>
<div class="t" style="right:128.00px;top:382.90px;font-size:8.5px;color:#3c3c3c;transform:scaleX(0.8871);transform-origin:100% 0">650,00</div>
<svg class="abs" style="left:184.30px;top:380.80px;" width="11" height="11" viewBox="0 0 11 11"><rect x="1" y="1" width="9" height="9" rx="1.8" fill="#d4f4da" stroke="#4c9f5f" stroke-width="1.9"/><path d="M4 1 L5.5 3.4 L7 1Z" fill="#3a8a50"/></svg>
<svg class="abs" style="left:204.15px;top:380.80px;" width="11" height="11" viewBox="0 0 11 11"><rect x="0" y="0" width="11" height="11" rx="2" fill="#2aa84a"/><path d="M5.5 2 V9 M2 5.5 H9" stroke="#9ee8ae" stroke-width="1"/></svg>
<svg class="abs" style="left:224.00px;top:380.80px;" width="11" height="11" viewBox="0 0 11 11"><rect x="1" y="1" width="9" height="9" rx="1.2" fill="#f0f0f0" stroke="#c8c8c8" stroke-width="1.8"/><path d="M3 4 H8 M3 6 H8" stroke="#d0d0d0" stroke-width="0.9"/></svg>
<svg class="abs" style="left:243.85px;top:380.80px;" width="11" height="11" viewBox="0 0 11 11"><rect x="0" y="0" width="11" height="11" rx="1.6" fill="#e6e6e6"/><rect x="2.5" y="4" width="6" height="4" fill="#f4f4f4"/></svg>
<div class="abs" style="left:180.00px;top:397.00px;width:817.00px;height:20.50px;background:#ffffff"></div>
<div class="abs" style="left:199.00px;top:397.00px;width:1.00px;height:20.50px;background:#ededed"></div>
<div class="abs" style="left:219.00px;top:397.00px;width:1.00px;height:20.50px;background:#ededed"></div>
<div class="abs" style="left:239.00px;top:397.00px;width:1.00px;height:20.50px;background:#ededed"></div>
<div class="abs" style="left:259.00px;top:397.00px;width:1.00px;height:20.50px;background:#ededed"></div>
<div class="abs" style="left:315.00px;top:397.00px;width:1.00px;height:20.50px;background:#ededed"></div>
<div class="abs" style="left:512.00px;top:397.00px;width:1.00px;height:20.50px;background:#ededed"></div>
<div class="abs" style="left:747.00px;top:397.00px;width:1.00px;height:20.50px;background:#ededed"></div>
<div class="abs" style="left:815.00px;top:397.00px;width:1.00px;height:20.50px;background:#ededed"></div>
<div class="abs" style="left:889.00px;top:397.00px;width:1.00px;height:20.50px;background:#ededed"></div>
<div class="abs" style="left:996.00px;top:397.00px;width:1.00px;height:20.50px;background:#ededed"></div>
<div class="t" style="left:260.50px;top:403.40px;font-size:8.5px;color:#3c3c3c;transform:scaleX(0.8729);transform-origin:0 0">6FF02945</div>
<div class="t" style="left:316.20px;top:403.40px;font-size:8.5px;color:#3c3c3c;transform:scaleX(0.8647);transform-origin:0 0">COA034004 animation C.CASTAN</div>
<div class="t" style="right:540.40px;top:403.40px;font-size:8.5px;color:#3c3c3c;transform:scaleX(0.8859);transform-origin:100% 0">28/04/2018</div>
<div class="t" style="left:584.00px;top:403.40px;font-size:8.5px;color:#3c3c3c;transform:scaleX(0.8318);transform-origin:0 0">C2D - C2D CONSEIL</div>
<div class="t" style="left:748.50px;top:403.40px;font-size:8.5px;color:#3c3c3c;transform:scaleX(0.8882);transform-origin:0 0">586 2018</div>
<div class="t" style="right:233.70px;top:403.40px;font-size:8.5px;color:#3c3c3c;transform:scaleX(0.8859);transform-origin:100% 0">30/04/2018</div>
<div class="t" style="left:890.40px;top:403.40px;font-size:8.5px;color:#3c3c3c;transform:scaleX(0.8224);transform-origin:0 0">EUR</div>
<div class="t" style="right:128.00px;top:403.40px;font-size:8.5px;color:#3c3c3c;transform:scaleX(0.8835);transform-origin:100% 0">3 300,00</div>
<svg class="abs" style="left:184.30px;top:401.30px;" width="11" height="11" viewBox="0 0 11 11"><rect x="1" y="1" width="9" height="9" rx="1.6" fill="#fbfbfb" stroke="#c6c6c6" stroke-width="1.9"/><path d="M4 1 L5.5 3.3 L7 1Z" fill="#c6c6c6"/></svg>
<svg class="abs" style="left:204.15px;top:401.30px;" width="11" height="11" viewBox="0 0 11 11"><rect x="0" y="0" width="11" height="11" rx="1.8" fill="#cbcbcb"/><path d="M5.5 2 V9 M2 5.5 H9" stroke="#e2e2e2" stroke-width="1"/></svg>
<svg class="abs" style="left:224.00px;top:401.30px;" width="11" height="11" viewBox="0 0 11 11"><rect x="1" y="1" width="9" height="9" rx="1.2" fill="#f0f0f0" stroke="#c8c8c8" stroke-width="1.8"/><path d="M3 4 H8 M3 6 H8" stroke="#d0d0d0" stroke-width="0.9"/></svg>
<svg class="abs" style="left:243.85px;top:401.30px;" width="11" height="11" viewBox="0 0 11 11"><rect x="0" y="0" width="11" height="11" rx="1.6" fill="#e6e6e6"/><rect x="2.5" y="4" width="6" height="4" fill="#f4f4f4"/></svg>
<div class="abs" style="left:180.00px;top:417.50px;width:817.00px;height:20.50px;background:#f7f7f7"></div>
<div class="abs" style="left:199.00px;top:417.50px;width:1.00px;height:20.50px;background:#ededed"></div>
<div class="abs" style="left:219.00px;top:417.50px;width:1.00px;height:20.50px;background:#ededed"></div>
<div class="abs" style="left:239.00px;top:417.50px;width:1.00px;height:20.50px;background:#ededed"></div>
<div class="abs" style="left:259.00px;top:417.50px;width:1.00px;height:20.50px;background:#ededed"></div>
<div class="abs" style="left:315.00px;top:417.50px;width:1.00px;height:20.50px;background:#ededed"></div>
<div class="abs" style="left:512.00px;top:417.50px;width:1.00px;height:20.50px;background:#ededed"></div>
<div class="abs" style="left:747.00px;top:417.50px;width:1.00px;height:20.50px;background:#ededed"></div>
<div class="abs" style="left:815.00px;top:417.50px;width:1.00px;height:20.50px;background:#ededed"></div>
<div class="abs" style="left:889.00px;top:417.50px;width:1.00px;height:20.50px;background:#ededed"></div>
<div class="abs" style="left:996.00px;top:417.50px;width:1.00px;height:20.50px;background:#ededed"></div>
<div class="t" style="left:260.50px;top:423.90px;font-size:8.5px;color:#3c3c3c;transform:scaleX(0.8729);transform-origin:0 0">6FF02946</div>
<div class="t" style="left:316.20px;top:423.90px;font-size:8.5px;color:#3c3c3c;transform:scaleX(0.8647);transform-origin:0 0">COA034004 animation C.CASTAN</div>
<div class="t" style="right:540.40px;top:423.90px;font-size:8.5px;color:#3c3c3c;transform:scaleX(0.8859);transform-origin:100% 0">28/04/2019</div>
<div class="t" style="left:584.00px;top:423.90px;font-size:8.5px;color:#3c3c3c;transform:scaleX(0.8318);transform-origin:0 0">C2D - C2D CONSEIL</div>
<div class="t" style="left:748.50px;top:423.90px;font-size:8.5px;color:#3c3c3c;transform:scaleX(0.8882);transform-origin:0 0">586 2018</div>
<div class="t" style="right:233.70px;top:423.90px;font-size:8.5px;color:#3c3c3c;transform:scaleX(0.8859);transform-origin:100% 0">31/05/2019</div>
<div class="t" style="left:890.40px;top:423.90px;font-size:8.5px;color:#3c3c3c;transform:scaleX(0.8224);transform-origin:0 0">EUR</div>
<div class="t" style="right:128.00px;top:423.90px;font-size:8.5px;color:#3c3c3c;transform:scaleX(0.8835);transform-origin:100% 0">3 300,00</div>
<svg class="abs" style="left:184.30px;top:421.80px;" width="11" height="11" viewBox="0 0 11 11"><rect x="1" y="1" width="9" height="9" rx="1.6" fill="#fbfbfb" stroke="#c6c6c6" stroke-width="1.9"/><path d="M4 1 L5.5 3.3 L7 1Z" fill="#c6c6c6"/></svg>
<svg class="abs" style="left:204.15px;top:421.80px;" width="11" height="11" viewBox="0 0 11 11"><rect x="0" y="0" width="11" height="11" rx="1.8" fill="#cbcbcb"/><path d="M5.5 2 V9 M2 5.5 H9" stroke="#e2e2e2" stroke-width="1"/></svg>
<svg class="abs" style="left:224.00px;top:421.80px;" width="11" height="11" viewBox="0 0 11 11"><rect x="1" y="1" width="9" height="9" rx="1.2" fill="#f0f0f0" stroke="#c8c8c8" stroke-width="1.8"/><path d="M3 4 H8 M3 6 H8" stroke="#d0d0d0" stroke-width="0.9"/></svg>
<svg class="abs" style="left:243.85px;top:421.80px;" width="11" height="11" viewBox="0 0 11 11"><rect x="0" y="0" width="11" height="11" rx="1.6" fill="#e6e6e6"/><rect x="2.5" y="4" width="6" height="4" fill="#f4f4f4"/></svg>
<div class="abs" style="left:180.00px;top:438.00px;width:817.00px;height:20.50px;background:#ffffff"></div>
<div class="abs" style="left:199.00px;top:438.00px;width:1.00px;height:20.50px;background:#ededed"></div>
<div class="abs" style="left:219.00px;top:438.00px;width:1.00px;height:20.50px;background:#ededed"></div>
<div class="abs" style="left:239.00px;top:438.00px;width:1.00px;height:20.50px;background:#ededed"></div>
<div class="abs" style="left:259.00px;top:438.00px;width:1.00px;height:20.50px;background:#ededed"></div>
<div class="abs" style="left:315.00px;top:438.00px;width:1.00px;height:20.50px;background:#ededed"></div>
<div class="abs" style="left:512.00px;top:438.00px;width:1.00px;height:20.50px;background:#ededed"></div>
<div class="abs" style="left:747.00px;top:438.00px;width:1.00px;height:20.50px;background:#ededed"></div>
<div class="abs" style="left:815.00px;top:438.00px;width:1.00px;height:20.50px;background:#ededed"></div>
<div class="abs" style="left:889.00px;top:438.00px;width:1.00px;height:20.50px;background:#ededed"></div>
<div class="abs" style="left:996.00px;top:438.00px;width:1.00px;height:20.50px;background:#ededed"></div>
<div class="t" style="left:260.50px;top:444.40px;font-size:8.5px;color:#3c3c3c;transform:scaleX(0.8729);transform-origin:0 0">6FF02947</div>
<div class="t" style="right:540.40px;top:444.40px;font-size:8.5px;color:#3c3c3c;transform:scaleX(0.8859);transform-origin:100% 0">01/05/2018</div>
<div class="t" style="left:584.00px;top:444.40px;font-size:8.5px;color:#3c3c3c;transform:scaleX(0.8376);transform-origin:0 0">AVRONSART - DENIS AVRONSART CONSULT...</div>
<div class="t" style="left:748.50px;top:444.40px;font-size:8.5px;color:#3c3c3c;transform:scaleX(0.8918);transform-origin:0 0">477</div>
<div class="t" style="right:233.70px;top:444.40px;font-size:8.5px;color:#3c3c3c;transform:scaleX(0.8859);transform-origin:100% 0">31/05/2018</div>
<div class="t" style="left:890.40px;top:444.40px;font-size:8.5px;color:#3c3c3c;transform:scaleX(0.8224);transform-origin:0 0">EUR</div>
<div class="t" style="right:128.00px;top:444.40px;font-size:8.5px;color:#3c3c3c;transform:scaleX(0.8835);transform-origin:100% 0">0,00</div>
<svg class="abs" style="left:184.30px;top:442.30px;" width="11" height="11" viewBox="0 0 11 11"><rect x="1" y="1" width="9" height="9" rx="1.6" fill="#fbfbfb" stroke="#c6c6c6" stroke-width="1.9"/><path d="M4 1 L5.5 3.3 L7 1Z" fill="#c6c6c6"/></svg>
<svg class="abs" style="left:204.15px;top:442.30px;" width="11" height="11" viewBox="0 0 11 11"><rect x="0" y="0" width="11" height="11" rx="1.8" fill="#cbcbcb"/><path d="M5.5 2 V9 M2 5.5 H9" stroke="#e2e2e2" stroke-width="1"/></svg>
<svg class="abs" style="left:224.00px;top:442.30px;" width="11" height="11" viewBox="0 0 11 11"><rect x="1" y="1" width="9" height="9" rx="1.2" fill="#f0f0f0" stroke="#c8c8c8" stroke-width="1.8"/><path d="M3 4 H8 M3 6 H8" stroke="#d0d0d0" stroke-width="0.9"/></svg>
<svg class="abs" style="left:243.85px;top:442.30px;" width="11" height="11" viewBox="0 0 11 11"><rect x="0" y="0" width="11" height="11" rx="1.6" fill="#e6e6e6"/><rect x="2.5" y="4" width="6" height="4" fill="#f4f4f4"/></svg>
<div class="abs" style="left:180.00px;top:458.50px;width:817.00px;height:20.50px;background:#f7f7f7"></div>
<div class="abs" style="left:199.00px;top:458.50px;width:1.00px;height:20.50px;background:#ededed"></div>
<div class="abs" style="left:219.00px;top:458.50px;width:1.00px;height:20.50px;background:#ededed"></div>
<div class="abs" style="left:239.00px;top:458.50px;width:1.00px;height:20.50px;background:#ededed"></div>
<div class="abs" style="left:259.00px;top:458.50px;width:1.00px;height:20.50px;background:#ededed"></div>
<div class="abs" style="left:315.00px;top:458.50px;width:1.00px;height:20.50px;background:#ededed"></div>
<div class="abs" style="left:512.00px;top:458.50px;width:1.00px;height:20.50px;background:#ededed"></div>
<div class="abs" style="left:747.00px;top:458.50px;width:1.00px;height:20.50px;background:#ededed"></div>
<div class="abs" style="left:815.00px;top:458.50px;width:1.00px;height:20.50px;background:#ededed"></div>
<div class="abs" style="left:889.00px;top:458.50px;width:1.00px;height:20.50px;background:#ededed"></div>
<div class="abs" style="left:996.00px;top:458.50px;width:1.00px;height:20.50px;background:#ededed"></div>
<div class="t" style="left:260.50px;top:464.90px;font-size:8.5px;color:#3c3c3c;transform:scaleX(0.8729);transform-origin:0 0">7FF00530</div>
<div class="t" style="left:316.20px;top:464.90px;font-size:8.5px;color:#3c3c3c;transform:scaleX(0.8565);transform-origin:0 0">CROSSKNOWLEDGE FCRO00401 34 licences accès mo...</div>
<div class="t" style="right:540.40px;top:464.90px;font-size:8.5px;color:#3c3c3c;transform:scaleX(0.8859);transform-origin:100% 0">01/03/2017</div>
<div class="t" style="left:584.00px;top:464.90px;font-size:8.5px;color:#3c3c3c;transform:scaleX(0.8224);transform-origin:0 0">CROSSKNOWLEDGE - CROSS KNOWLEDGE</div>
<div class="t" style="left:748.50px;top:464.90px;font-size:8.5px;color:#3c3c3c;transform:scaleX(0.8788);transform-origin:0 0">FA 09563</div>
<div class="t" style="right:233.70px;top:464.90px;font-size:8.5px;color:#3c3c3c;transform:scaleX(0.8859);transform-origin:100% 0">10/04/2017</div>
<div class="t" style="left:890.40px;top:464.90px;font-size:8.5px;color:#3c3c3c;transform:scaleX(0.8224);transform-origin:0 0">EUR</div>
<div class="t" style="right:128.00px;top:464.90px;font-size:8.5px;color:#3c3c3c;transform:scaleX(0.8835);transform-origin:100% 0">3 500,00</div>
<svg class="abs" style="left:184.30px;top:462.80px;" width="11" height="11" viewBox="0 0 11 11"><rect x="1" y="1" width="9" height="9" rx="1.8" fill="#d4f4da" stroke="#4c9f5f" stroke-width="1.9"/><path d="M4 1 L5.5 3.4 L7 1Z" fill="#3a8a50"/></svg>
<svg class="abs" style="left:204.15px;top:462.80px;" width="11" height="11" viewBox="0 0 11 11"><rect x="0" y="0" width="11" height="11" rx="2" fill="#2aa84a"/><path d="M5.5 2 V9 M2 5.5 H9" stroke="#9ee8ae" stroke-width="1"/></svg>
<svg class="abs" style="left:224.00px;top:462.80px;" width="11" height="11" viewBox="0 0 11 11"><rect x="0.9" y="0.9" width="9.2" height="9.2" rx="1.6" fill="#9cc8a6" stroke="#24603a" stroke-width="1.8"/><rect x="2.8" y="2.8" width="5.4" height="1.2" fill="#24603a"/><rect x="2.8" y="5" width="5.4" height="3.2" fill="#4a8a5c"/></svg>
<svg class="abs" style="left:243.85px;top:462.80px;" width="11" height="11" viewBox="0 0 11 11"><rect x="0" y="0" width="11" height="11" rx="2" fill="#48b564"/><rect x="2" y="4" width="6" height="4.5" fill="#d8f8e0"/><path d="M5 6 L9.5 1.5" stroke="#e0ffe8" stroke-width="1"/></svg>
<div class="abs" style="left:180.00px;top:479.00px;width:817.00px;height:20.50px;background:#ffffff"></div>
<div class="abs" style="left:199.00px;top:479.00px;width:1.00px;height:20.50px;background:#ededed"></div>
<div class="abs" style="left:219.00px;top:479.00px;width:1.00px;height:20.50px;background:#ededed"></div>
<div class="abs" style="left:239.00px;top:479.00px;width:1.00px;height:20.50px;background:#ededed"></div>
<div class="abs" style="left:259.00px;top:479.00px;width:1.00px;height:20.50px;background:#ededed"></div>
<div class="abs" style="left:315.00px;top:479.00px;width:1.00px;height:20.50px;background:#ededed"></div>
<div class="abs" style="left:512.00px;top:479.00px;width:1.00px;height:20.50px;background:#ededed"></div>
<div class="abs" style="left:747.00px;top:479.00px;width:1.00px;height:20.50px;background:#ededed"></div>
<div class="abs" style="left:815.00px;top:479.00px;width:1.00px;height:20.50px;background:#ededed"></div>
<div class="abs" style="left:889.00px;top:479.00px;width:1.00px;height:20.50px;background:#ededed"></div>
<div class="abs" style="left:996.00px;top:479.00px;width:1.00px;height:20.50px;background:#ededed"></div>
<div class="t" style="left:260.50px;top:485.40px;font-size:8.5px;color:#3c3c3c;transform:scaleX(0.8729);transform-origin:0 0">7FF00978</div>
<div class="t" style="left:316.20px;top:485.40px;font-size:8.5px;color:#3c3c3c;transform:scaleX(0.8294);transform-origin:0 0">2M TRANSPORT</div>
<div class="t" style="right:540.40px;top:485.40px;font-size:8.5px;color:#3c3c3c;transform:scaleX(0.8859);transform-origin:100% 0">07/05/2017</div>
<div class="t" style="left:584.00px;top:485.40px;font-size:8.5px;color:#3c3c3c;transform:scaleX(0.8294);transform-origin:0 0">2MTRANSPORT - 2M TRANSPORT</div>
<div class="t" style="left:748.50px;top:485.40px;font-size:8.5px;color:#3c3c3c;transform:scaleX(0.8224);transform-origin:0 0">TEST</div>
<div class="t" style="right:233.70px;top:485.40px;font-size:8.5px;color:#3c3c3c;transform:scaleX(0.8859);transform-origin:100% 0">22/05/2017</div>
<div class="t" style="left:890.40px;top:485.40px;font-size:8.5px;color:#3c3c3c;transform:scaleX(0.8224);transform-origin:0 0">EUR</div>
<div class="t" style="right:128.00px;top:485.40px;font-size:8.5px;color:#3c3c3c;transform:scaleX(0.8871);transform-origin:100% 0">210,00</div>
<svg class="abs" style="left:184.30px;top:483.30px;" width="11" height="11" viewBox="0 0 11 11"><rect x="1" y="1" width="9" height="9" rx="1.8" fill="#d4f4da" stroke="#4c9f5f" stroke-width="1.9"/><path d="M4 1 L5.5 3.4 L7 1Z" fill="#3a8a50"/></svg>
<svg class="abs" style="left:204.15px;top:483.30px;" width="11" height="11" viewBox="0 0 11 11"><rect x="0" y="0" width="11" height="11" rx="2" fill="#2aa84a"/><path d="M5.5 2 V9 M2 5.5 H9" stroke="#9ee8ae" stroke-width="1"/></svg>
<svg class="abs" style="left:224.00px;top:483.30px;" width="11" height="11" viewBox="0 0 11 11"><rect x="0.9" y="0.9" width="9.2" height="9.2" rx="1.6" fill="#9cc8a6" stroke="#24603a" stroke-width="1.8"/><rect x="2.8" y="2.8" width="5.4" height="1.2" fill="#24603a"/><rect x="2.8" y="5" width="5.4" height="3.2" fill="#4a8a5c"/></svg>
<svg class="abs" style="left:243.85px;top:483.30px;" width="11" height="11" viewBox="0 0 11 11"><rect x="0" y="0" width="11" height="11" rx="1.6" fill="#e6e6e6"/><rect x="2.5" y="4" width="6" height="4" fill="#f4f4f4"/></svg>
<div class="abs" style="left:180.00px;top:499.50px;width:817.00px;height:20.50px;background:#f7f7f7"></div>
<div class="abs" style="left:199.00px;top:499.50px;width:1.00px;height:20.50px;background:#ededed"></div>
<div class="abs" style="left:219.00px;top:499.50px;width:1.00px;height:20.50px;background:#ededed"></div>
<div class="abs" style="left:239.00px;top:499.50px;width:1.00px;height:20.50px;background:#ededed"></div>
<div class="abs" style="left:259.00px;top:499.50px;width:1.00px;height:20.50px;background:#ededed"></div>
<div class="abs" style="left:315.00px;top:499.50px;width:1.00px;height:20.50px;background:#ededed"></div>
<div class="abs" style="left:512.00px;top:499.50px;width:1.00px;height:20.50px;background:#ededed"></div>
<div class="abs" style="left:747.00px;top:499.50px;width:1.00px;height:20.50px;background:#ededed"></div>
<div class="abs" style="left:815.00px;top:499.50px;width:1.00px;height:20.50px;background:#ededed"></div>
<div class="abs" style="left:889.00px;top:499.50px;width:1.00px;height:20.50px;background:#ededed"></div>
<div class="abs" style="left:996.00px;top:499.50px;width:1.00px;height:20.50px;background:#ededed"></div>
<div class="t" style="left:260.50px;top:505.90px;font-size:8.5px;color:#3c3c3c;transform:scaleX(0.8729);transform-origin:0 0">7FF00990</div>
<div class="t" style="left:316.20px;top:505.90px;font-size:8.5px;color:#3c3c3c;transform:scaleX(0.8376);transform-origin:0 0">NATURE &amp; DECOUVERTES - SENSITIVE WAYS&nbsp; - Mai 2017</div>
<div class="t" style="right:540.40px;top:505.90px;font-size:8.5px;color:#3c3c3c;transform:scaleX(0.8859);transform-origin:100% 0">12/05/2017</div>
<div class="t" style="left:584.00px;top:505.90px;font-size:8.5px;color:#3c3c3c;transform:scaleX(0.8341);transform-origin:0 0">SENSITIVEWAYS - SENSITIVE WAYS</div>
<div class="t" style="right:233.70px;top:505.90px;font-size:8.5px;color:#3c3c3c;transform:scaleX(0.8859);transform-origin:100% 0">22/05/2017</div>
<div class="t" style="left:890.40px;top:505.90px;font-size:8.5px;color:#3c3c3c;transform:scaleX(0.8224);transform-origin:0 0">EUR</div>
<div class="t" style="right:128.00px;top:505.90px;font-size:8.5px;color:#3c3c3c;transform:scaleX(0.8871);transform-origin:100% 0">630,00</div>
<svg class="abs" style="left:184.30px;top:503.80px;" width="11" height="11" viewBox="0 0 11 11"><rect x="1" y="1" width="9" height="9" rx="1.8" fill="#fff0a8" stroke="#f0cc40" stroke-width="1.9"/><path d="M4 1 L5.5 3.4 L7 1Z" fill="#d8b030"/></svg>
<svg class="abs" style="left:204.15px;top:503.80px;" width="11" height="11" viewBox="0 0 11 11"><rect x="0" y="0" width="11" height="11" rx="1.8" fill="#cbcbcb"/><path d="M5.5 2 V9 M2 5.5 H9" stroke="#e2e2e2" stroke-width="1"/></svg>
<svg class="abs" style="left:224.00px;top:503.80px;" width="11" height="11" viewBox="0 0 11 11"><rect x="0.9" y="0.9" width="9.2" height="9.2" rx="1.6" fill="#9cc8a6" stroke="#24603a" stroke-width="1.8"/><rect x="2.8" y="2.8" width="5.4" height="1.2" fill="#24603a"/><rect x="2.8" y="5" width="5.4" height="3.2" fill="#4a8a5c"/></svg>
<svg class="abs" style="left:243.85px;top:503.80px;" width="11" height="11" viewBox="0 0 11 11"><rect x="0" y="0" width="11" height="11" rx="1.6" fill="#e6e6e6"/><rect x="2.5" y="4" width="6" height="4" fill="#f4f4f4"/></svg>
<div class="abs" style="left:180.00px;top:520.00px;width:817.00px;height:20.50px;background:#ffffff"></div>
<div class="abs" style="left:199.00px;top:520.00px;width:1.00px;height:20.50px;background:#ededed"></div>
<div class="abs" style="left:219.00px;top:520.00px;width:1.00px;height:20.50px;background:#ededed"></div>
<div class="abs" style="left:239.00px;top:520.00px;width:1.00px;height:20.50px;background:#ededed"></div>
<div class="abs" style="left:259.00px;top:520.00px;width:1.00px;height:20.50px;background:#ededed"></div>
<div class="abs" style="left:315.00px;top:520.00px;width:1.00px;height:20.50px;background:#ededed"></div>
<div class="abs" style="left:512.00px;top:520.00px;width:1.00px;height:20.50px;background:#ededed"></div>
<div class="abs" style="left:747.00px;top:520.00px;width:1.00px;height:20.50px;background:#ededed"></div>
<div class="abs" style="left:815.00px;top:520.00px;width:1.00px;height:20.50px;background:#ededed"></div>
<div class="abs" style="left:889.00px;top:520.00px;width:1.00px;height:20.50px;background:#ededed"></div>
<div class="abs" style="left:996.00px;top:520.00px;width:1.00px;height:20.50px;background:#ededed"></div>
<div class="t" style="left:260.50px;top:526.40px;font-size:8.5px;color:#3c3c3c;transform:scaleX(0.8729);transform-origin:0 0">8AF00001</div>
<div class="t" style="right:540.40px;top:526.40px;font-size:8.5px;color:#3c3c3c;transform:scaleX(0.8859);transform-origin:100% 0">08/05/2018</div>
<div class="t" style="left:584.00px;top:526.40px;font-size:8.5px;color:#3c3c3c;transform:scaleX(0.8282);transform-origin:0 0">AVEXIA - UVET FRANCE</div>
<div class="t" style="left:748.50px;top:526.40px;font-size:8.5px;color:#3c3c3c;transform:scaleX(0.8318);transform-origin:0 0">UVET AVOIR FC...</div>
<div class="t" style="left:890.40px;top:526.40px;font-size:8.5px;color:#3c3c3c;transform:scaleX(0.8224);transform-origin:0 0">EUR</div>
<div class="t" style="right:128.00px;top:526.40px;font-size:8.5px;color:#3c3c3c;transform:scaleX(0.8812);transform-origin:100% 0">-520,00</div>
<svg class="abs" style="left:184.30px;top:524.30px;" width="11" height="11" viewBox="0 0 11 11"><rect x="1" y="1" width="9" height="9" rx="1.8" fill="#d4f4da" stroke="#4c9f5f" stroke-width="1.9"/><path d="M4 1 L5.5 3.4 L7 1Z" fill="#3a8a50"/></svg>
<svg class="abs" style="left:204.15px;top:524.30px;" width="11" height="11" viewBox="0 0 11 11"><rect x="0" y="0" width="11" height="11" rx="2" fill="#2aa84a"/><path d="M5.5 2 V9 M2 5.5 H9" stroke="#9ee8ae" stroke-width="1"/></svg>
<svg class="abs" style="left:224.00px;top:524.30px;" width="11" height="11" viewBox="0 0 11 11"><rect x="0.9" y="0.9" width="9.2" height="9.2" rx="1.6" fill="#9cc8a6" stroke="#24603a" stroke-width="1.8"/><rect x="2.8" y="2.8" width="5.4" height="1.2" fill="#24603a"/><rect x="2.8" y="5" width="5.4" height="3.2" fill="#4a8a5c"/></svg>
<svg class="abs" style="left:243.85px;top:524.30px;" width="11" height="11" viewBox="0 0 11 11"><rect x="0" y="0" width="11" height="11" rx="2" fill="#f4d040"/><rect x="2" y="4.5" width="6.5" height="4" fill="#fbeb98"/><path d="M5 6 L9.5 1.5" stroke="#fbeb98" stroke-width="1"/></svg>
<div class="abs" style="left:180.00px;top:540.50px;width:817.00px;height:20.50px;background:#f7f7f7"></div>
<div class="abs" style="left:199.00px;top:540.50px;width:1.00px;height:20.50px;background:#ededed"></div>
<div class="abs" style="left:219.00px;top:540.50px;width:1.00px;height:20.50px;background:#ededed"></div>
<div class="abs" style="left:239.00px;top:540.50px;width:1.00px;height:20.50px;background:#ededed"></div>
<div class="abs" style="left:259.00px;top:540.50px;width:1.00px;height:20.50px;background:#ededed"></div>
<div class="abs" style="left:315.00px;top:540.50px;width:1.00px;height:20.50px;background:#ededed"></div>
<div class="abs" style="left:512.00px;top:540.50px;width:1.00px;height:20.50px;background:#ededed"></div>
<div class="abs" style="left:747.00px;top:540.50px;width:1.00px;height:20.50px;background:#ededed"></div>
<div class="abs" style="left:815.00px;top:540.50px;width:1.00px;height:20.50px;background:#ededed"></div>
<div class="abs" style="left:889.00px;top:540.50px;width:1.00px;height:20.50px;background:#ededed"></div>
<div class="abs" style="left:996.00px;top:540.50px;width:1.00px;height:20.50px;background:#ededed"></div>
<div class="t" style="left:260.50px;top:546.90px;font-size:8.5px;color:#3c3c3c;transform:scaleX(0.8718);transform-origin:0 0">8AR00002</div>
<div class="t" style="right:540.40px;top:546.90px;font-size:8.5px;color:#3c3c3c;transform:scaleX(0.8859);transform-origin:100% 0">09/05/2018</div>
<div class="t" style="left:584.00px;top:546.90px;font-size:8.5px;color:#3c3c3c;transform:scaleX(0.8282);transform-origin:0 0">AVEXIA - UVET FRANCE</div>
<div class="t" style="left:748.50px;top:546.90px;font-size:8.5px;color:#3c3c3c;transform:scaleX(0.8318);transform-origin:0 0">UVET AVOIR FC...</div>
<div class="t" style="left:890.40px;top:546.90px;font-size:8.5px;color:#3c3c3c;transform:scaleX(0.8224);transform-origin:0 0">EUR</div>
<div class="t" style="right:128.00px;top:546.90px;font-size:8.5px;color:#3c3c3c;transform:scaleX(0.8800);transform-origin:100% 0">-1 595,31</div>
<svg class="abs" style="left:184.30px;top:544.80px;" width="11" height="11" viewBox="0 0 11 11"><rect x="1" y="1" width="9" height="9" rx="1.8" fill="#d4f4da" stroke="#4c9f5f" stroke-width="1.9"/><path d="M4 1 L5.5 3.4 L7 1Z" fill="#3a8a50"/></svg>
<svg class="abs" style="left:204.15px;top:544.80px;" width="11" height="11" viewBox="0 0 11 11"><rect x="0" y="0" width="11" height="11" rx="2" fill="#2aa84a"/><path d="M5.5 2 V9 M2 5.5 H9" stroke="#9ee8ae" stroke-width="1"/></svg>
<svg class="abs" style="left:224.00px;top:544.80px;" width="11" height="11" viewBox="0 0 11 11"><rect x="0.9" y="0.9" width="9.2" height="9.2" rx="1.6" fill="#9cc8a6" stroke="#24603a" stroke-width="1.8"/><rect x="2.8" y="2.8" width="5.4" height="1.2" fill="#24603a"/><rect x="2.8" y="5" width="5.4" height="3.2" fill="#4a8a5c"/></svg>
<svg class="abs" style="left:243.85px;top:544.80px;" width="11" height="11" viewBox="0 0 11 11"><rect x="0" y="0" width="11" height="11" rx="2" fill="#f4d040"/><rect x="2" y="4.5" width="6.5" height="4" fill="#fbeb98"/><path d="M5 6 L9.5 1.5" stroke="#fbeb98" stroke-width="1"/></svg>
<div class="abs" style="left:180.00px;top:561.00px;width:817.00px;height:20.50px;background:#ffffff"></div>
<div class="abs" style="left:199.00px;top:561.00px;width:1.00px;height:20.50px;background:#ededed"></div>
<div class="abs" style="left:219.00px;top:561.00px;width:1.00px;height:20.50px;background:#ededed"></div>
<div class="abs" style="left:239.00px;top:561.00px;width:1.00px;height:20.50px;background:#ededed"></div>
<div class="abs" style="left:259.00px;top:561.00px;width:1.00px;height:20.50px;background:#ededed"></div>
<div class="abs" style="left:315.00px;top:561.00px;width:1.00px;height:20.50px;background:#ededed"></div>
<div class="abs" style="left:512.00px;top:561.00px;width:1.00px;height:20.50px;background:#ededed"></div>
<div class="abs" style="left:747.00px;top:561.00px;width:1.00px;height:20.50px;background:#ededed"></div>
<div class="abs" style="left:815.00px;top:561.00px;width:1.00px;height:20.50px;background:#ededed"></div>
<div class="abs" style="left:889.00px;top:561.00px;width:1.00px;height:20.50px;background:#ededed"></div>
<div class="abs" style="left:996.00px;top:561.00px;width:1.00px;height:20.50px;background:#ededed"></div>
<div class="t" style="left:260.50px;top:567.40px;font-size:8.5px;color:#3c3c3c;transform:scaleX(0.8729);transform-origin:0 0">8FF00348</div>
<div class="t" style="left:316.20px;top:567.40px;font-size:8.5px;color:#3c3c3c;transform:scaleX(0.8471);transform-origin:0 0">IVB ICOA03807 07-09/02 ANIM I.VITTE</div>
<div class="t" style="right:540.40px;top:567.40px;font-size:8.5px;color:#3c3c3c;transform:scaleX(0.8859);transform-origin:100% 0">14/02/2018</div>
<div class="t" style="left:584.00px;top:567.40px;font-size:8.5px;color:#3c3c3c;transform:scaleX(0.8294);transform-origin:0 0">IVB - IVB CONSULTING</div>
<div class="t" style="left:748.50px;top:567.40px;font-size:8.5px;color:#3c3c3c;transform:scaleX(0.8812);transform-origin:0 0">FA 1402181</div>
<div class="t" style="right:233.70px;top:567.40px;font-size:8.5px;color:#3c3c3c;transform:scaleX(0.8859);transform-origin:100% 0">10/04/2018</div>
<div class="t" style="left:890.40px;top:567.40px;font-size:8.5px;color:#3c3c3c;transform:scaleX(0.8224);transform-origin:0 0">EUR</div>
<div class="t" style="right:128.00px;top:567.40px;font-size:8.5px;color:#3c3c3c;transform:scaleX(0.8835);transform-origin:100% 0">3 300,00</div>
<svg class="abs" style="left:184.30px;top:565.30px;" width="11" height="11" viewBox="0 0 11 11"><rect x="1" y="1" width="9" height="9" rx="1.8" fill="#d4f4da" stroke="#4c9f5f" stroke-width="1.9"/><path d="M4 1 L5.5 3.4 L7 1Z" fill="#3a8a50"/></svg>
<svg class="abs" style="left:204.15px;top:565.30px;" width="11" height="11" viewBox="0 0 11 11"><rect x="0" y="0" width="11" height="11" rx="2" fill="#2aa84a"/><path d="M5.5 2 V9 M2 5.5 H9" stroke="#9ee8ae" stroke-width="1"/></svg>
<svg class="abs" style="left:224.00px;top:565.30px;" width="11" height="11" viewBox="0 0 11 11"><rect x="0.9" y="0.9" width="9.2" height="9.2" rx="1.6" fill="#9cc8a6" stroke="#24603a" stroke-width="1.8"/><rect x="2.8" y="2.8" width="5.4" height="1.2" fill="#24603a"/><rect x="2.8" y="5" width="5.4" height="3.2" fill="#4a8a5c"/></svg>
<svg class="abs" style="left:243.85px;top:565.30px;" width="11" height="11" viewBox="0 0 11 11"><rect x="0" y="0" width="11" height="11" rx="2" fill="#f4d040"/><rect x="2" y="4.5" width="6.5" height="4" fill="#fbeb98"/><path d="M5 6 L9.5 1.5" stroke="#fbeb98" stroke-width="1"/></svg>
<div class="abs" style="left:180.00px;top:581.50px;width:817.00px;height:20.50px;background:#f7f7f7"></div>
<div class="abs" style="left:199.00px;top:581.50px;width:1.00px;height:20.50px;background:#ededed"></div>
<div class="abs" style="left:219.00px;top:581.50px;width:1.00px;height:20.50px;background:#ededed"></div>
<div class="abs" style="left:239.00px;top:581.50px;width:1.00px;height:20.50px;background:#ededed"></div>
<div class="abs" style="left:259.00px;top:581.50px;width:1.00px;height:20.50px;background:#ededed"></div>
<div class="abs" style="left:315.00px;top:581.50px;width:1.00px;height:20.50px;background:#ededed"></div>
<div class="abs" style="left:512.00px;top:581.50px;width:1.00px;height:20.50px;background:#ededed"></div>
<div class="abs" style="left:747.00px;top:581.50px;width:1.00px;height:20.50px;background:#ededed"></div>
<div class="abs" style="left:815.00px;top:581.50px;width:1.00px;height:20.50px;background:#ededed"></div>
<div class="abs" style="left:889.00px;top:581.50px;width:1.00px;height:20.50px;background:#ededed"></div>
<div class="abs" style="left:996.00px;top:581.50px;width:1.00px;height:20.50px;background:#ededed"></div>
<div class="t" style="left:260.50px;top:587.90px;font-size:8.5px;color:#3c3c3c;transform:scaleX(0.8729);transform-origin:0 0">8FF00424</div>
<div class="t" style="left:316.20px;top:587.90px;font-size:8.5px;color:#3c3c3c;transform:scaleX(0.8459);transform-origin:0 0">VERSAILLES TOURISME ICOI00203 17 MAI=Visite guid...</div>
<div class="t" style="right:540.40px;top:587.90px;font-size:8.5px;color:#3c3c3c;transform:scaleX(0.8859);transform-origin:100% 0">06/03/2018</div>
<div class="t" style="left:584.00px;top:587.90px;font-size:8.5px;color:#3c3c3c;transform:scaleX(0.8247);transform-origin:0 0">VERSAILLESTOURISM - OFFICE DE TOURISM...</div>
<div class="t" style="left:748.50px;top:587.90px;font-size:8.5px;color:#3c3c3c;transform:scaleX(0.8824);transform-origin:0 0">FA CF2018030011</div>
<div class="t" style="right:233.70px;top:587.90px;font-size:8.5px;color:#3c3c3c;transform:scaleX(0.8859);transform-origin:100% 0">10/05/2018</div>
<div class="t" style="left:890.40px;top:587.90px;font-size:8.5px;color:#3c3c3c;transform:scaleX(0.8224);transform-origin:0 0">EUR</div>
<div class="t" style="right:128.00px;top:587.90px;font-size:8.5px;color:#3c3c3c;transform:scaleX(0.8871);transform-origin:100% 0">747,52</div>
<svg class="abs" style="left:184.30px;top:585.80px;" width="11" height="11" viewBox="0 0 11 11"><rect x="1" y="1" width="9" height="9" rx="1.8" fill="#d4f4da" stroke="#4c9f5f" stroke-width="1.9"/><path d="M4 1 L5.5 3.4 L7 1Z" fill="#3a8a50"/></svg>
<svg class="abs" style="left:204.15px;top:585.80px;" width="11" height="11" viewBox="0 0 11 11"><rect x="0" y="0" width="11" height="11" rx="2" fill="#2aa84a"/><path d="M5.5 2 V9 M2 5.5 H9" stroke="#9ee8ae" stroke-width="1"/></svg>
<svg class="abs" style="left:224.00px;top:585.80px;" width="11" height="11" viewBox="0 0 11 11"><rect x="0.9" y="0.9" width="9.2" height="9.2" rx="1.6" fill="#9cc8a6" stroke="#24603a" stroke-width="1.8"/><rect x="2.8" y="2.8" width="5.4" height="1.2" fill="#24603a"/><rect x="2.8" y="5" width="5.4" height="3.2" fill="#4a8a5c"/></svg>
<svg class="abs" style="left:243.85px;top:585.80px;" width="11" height="11" viewBox="0 0 11 11"><rect x="0" y="0" width="11" height="11" rx="2" fill="#f4d040"/><rect x="2" y="4.5" width="6.5" height="4" fill="#fbeb98"/><path d="M5 6 L9.5 1.5" stroke="#fbeb98" stroke-width="1"/></svg>
<div class="abs" style="left:998.50px;top:171.50px;width:5.50px;height:19.00px;background:#1a8cf0;border-radius:2px"></div>
<div class="abs" style="left:1000.20px;top:180.00px;width:2.20px;height:2.20px;background:#aef0ff;border-radius:50%"></div>
<div class="abs" style="left:1004.00px;top:192.00px;width:1.00px;height:418.00px;background:#ececec"></div>
<div class="abs" style="left:1000.00px;top:193.00px;width:3.50px;height:73.00px;background:#8a8a8a;border-radius:1px"></div>
<div class="abs" style="left:180.00px;top:609.50px;width:817.00px;height:1.00px;background:#e0e0e0"></div>
<div class="abs" style="left:180.60px;top:605.00px;width:510.00px;height:4.00px;background:#7a7a7a;border-radius:1px"></div>
<div class="abs" style="left:999.00px;top:604.50px;width:5.50px;height:5.50px;background:#8a8a8a"></div>
<div class="t" style="left:181.00px;top:620.80px;font-size:7.6px;color:#4a82b4;text-decoration:underline">Paramètres d'affichage</div>
<div class="abs" style="left:1022.20px;top:171.20px;width:78.80px;height:19.20px;border:1px solid #a6bccb;border-bottom-color:#7a92a4;border-radius:1px;background:#f7fcff"></div>
<div class="t" style="left:920.20px;width:300px;text-align:center;top:178.00px;font-size:8.2px;font-weight:bold;color:#3a76b4">Documents</div>
<div class="abs" style="left:1022.20px;top:195.60px;width:78.80px;height:19.20px;border:1px solid #a6bccb;border-bottom-color:#7a92a4;border-radius:1px;background:#f7fcff"></div>
<div class="t" style="left:920.00px;width:300px;text-align:center;top:202.40px;font-size:8.2px;font-weight:bold;color:#3a76b4">Afficher</div>
<div class="abs" style="left:1022.20px;top:220.30px;width:78.80px;height:19.20px;border:1px solid #a6bccb;border-bottom-color:#7a92a4;border-radius:1px;background:#f7fcff"></div>
<div class="t" style="left:920.00px;width:300px;text-align:center;top:227.10px;font-size:8.2px;font-weight:bold;color:#3a76b4">Fiche</div>
<div class="abs" style="left:1022.20px;top:269.50px;width:78.80px;height:19.20px;border:1px solid #a6bccb;border-bottom-color:#7a92a4;border-radius:1px;background:#f7fcff"></div>
<div class="t" style="left:919.80px;width:300px;text-align:center;top:276.30px;font-size:8.2px;font-weight:bold;color:#3a76b4">Ajouter</div>
<div class="abs" style="left:1022.20px;top:319.40px;width:78.80px;height:19.20px;border:1px solid #a6bccb;border-bottom-color:#7a92a4;border-radius:1px;background:#f7fcff"></div>
<div class="t" style="left:920.20px;width:300px;text-align:center;top:326.20px;font-size:8.2px;font-weight:bold;color:#3a76b4">Supprimer</div>
<svg class="abs" style="left:1025.00px;top:172.00px;" width="16" height="17" viewBox="0 0 16 17"><rect x="0.5" y="5" width="5" height="1.3" fill="#2c6fc0"/><rect x="0.5" y="7.2" width="5" height="1.3" fill="#3a86d8"/><rect x="0.5" y="9.4" width="5" height="1.3" fill="#2c6fc0"/><rect x="0.5" y="11.6" width="5" height="1.3" fill="#2c6fc0"/><path d="M8.5 1 H11 L14 3.5 V8 H8.5Z" fill="#2b78cc"/><path d="M8.5 9.5 H11 L14 12 V16 H8.5Z" fill="#2b78cc"/><rect x="9.5" y="3" width="1.2" height="1.6" fill="#bfe4ff"/><rect x="9.5" y="11.5" width="1.2" height="1.6" fill="#bfe4ff"/></svg>
<svg class="abs" style="left:1025.00px;top:198.00px;" width="14" height="14" viewBox="0 0 14 14"><rect x="0.5" y="3.5" width="10" height="10" fill="#2a8ae6"/><path d="M6 8 L12.5 1.5 M9 1.5 H12.5 V5" stroke="#2a8ae6" stroke-width="1.6" fill="none"/><path d="M6 8 L10 4" stroke="#fff" stroke-width="1"/></svg>
<svg class="abs" style="left:1024.50px;top:223.00px;" width="14" height="14" viewBox="0 0 14 14"><rect x="3" y="0.5" width="8" height="4" fill="none" stroke="#2a8ae6" stroke-width="1.2"/><rect x="0.5" y="4.5" width="13" height="6" fill="#2a8ae6"/><rect x="3" y="9" width="8" height="4.5" fill="#fff" stroke="#2a8ae6" stroke-width="1.2"/></svg>
<svg class="abs" style="left:1025.00px;top:272.50px;" width="14" height="14" viewBox="0 0 14 14"><path d="M7 0.5 V13.5 M0.5 7 H13.5" stroke="#2a8ae6" stroke-width="2.6"/></svg>
<svg class="abs" style="left:1026.00px;top:322.00px;" width="12" height="15" viewBox="0 0 12 15"><rect x="0.5" y="2" width="10.5" height="1.6" fill="#2a8ae6"/><rect x="4" y="0.3" width="3.5" height="1.6" fill="#2a8ae6"/><path d="M1.5 4.5 H10 L9.3 14 H2.2Z" fill="#2a8ae6"/><path d="M4 6 V12.5 M5.75 6 V12.5 M7.5 6 V12.5" stroke="#fff" stroke-width="0.7"/></svg>
</div></body></html>
